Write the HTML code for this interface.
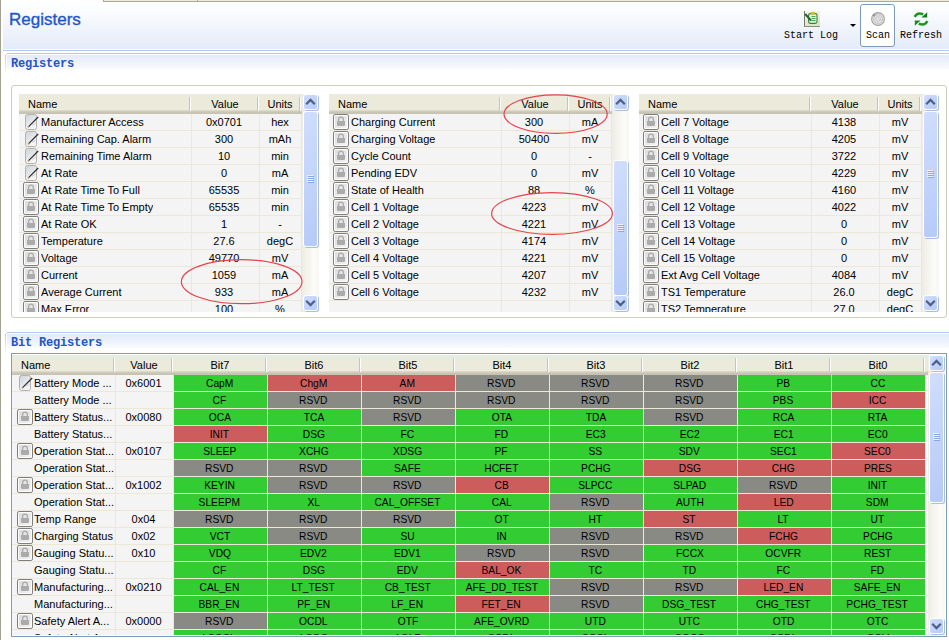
<!DOCTYPE html>
<html><head><meta charset="utf-8"><title>Registers</title>
<style>
html,body{margin:0;padding:0}
body{width:949px;height:640px;position:relative;overflow:hidden;background:#fff;font-family:"Liberation Sans",sans-serif;font-size:11px;color:#000}
.a{position:absolute;box-sizing:content-box}
.t{white-space:nowrap;overflow:hidden}
</style></head><body>
<svg width="0" height="0" style="position:absolute"><defs><linearGradient id="eg" x1="0" y1="0" x2="0.6" y2="1"><stop offset="0" stop-color="#cfd3d8"/><stop offset="1" stop-color="#f6f6f6"/></linearGradient><linearGradient id="lg" x1="0" y1="0" x2="1" y2="1"><stop offset="0" stop-color="#dcdcdc"/><stop offset="1" stop-color="#f2f2f2"/></linearGradient></defs></svg><div class="a" style="left:0;top:0;width:1px;height:640px;background:#a3a192"></div>
<div class="a" style="left:103px;top:0;width:846px;height:1px;background:#efebdb"></div>
<div class="a" style="left:103px;top:1px;width:846px;height:1px;background:#aba897"></div>
<div class="a" style="left:103px;top:0;width:1px;height:2px;background:#aba897"></div>
<div class="a" style="left:197px;top:0;width:1px;height:1px;background:#aba897"></div>
<div class="a" style="left:3px;top:2px;width:946px;height:47px;background:linear-gradient(to bottom,#ffffff 0%,#fafcfe 20%,#e4ebf9 100%)"></div>
<div class="a" style="left:3px;top:50px;width:946px;height:1px;background:#b3c8f1"></div>
<div class="a" style="left:9px;top:8px;font-size:17px;line-height:24px;color:#1f56c6;-webkit-text-stroke:0.35px #1f56c6;white-space:nowrap">Registers</div>
<div class="a" style="left:860px;top:4px;width:33px;height:41px;border:1px solid #7d9ab8;border-radius:3px;background:#fff"></div>
<div class="a" style="left:784px;top:30px;font-family:'Liberation Mono',monospace;font-size:10px;line-height:12px;white-space:nowrap;color:#000">Start Log</div>
<div class="a" style="left:866px;top:30px;font-family:'Liberation Mono',monospace;font-size:10px;line-height:12px;white-space:nowrap;color:#000">Scan</div>
<div class="a" style="left:900px;top:30px;font-family:'Liberation Mono',monospace;font-size:10px;line-height:12px;white-space:nowrap;color:#000">Refresh</div>
<div class="a" style="left:850px;top:24px;width:0;height:0;border-left:3px solid transparent;border-right:3px solid transparent;border-top:3px solid #000"></div>
<div class="a" style="left:804px;top:11px;width:16px;height:16px"><svg width="16" height="16" viewBox="0 0 16 16"><defs><linearGradient id="slbg" x1="0" y1="0" x2="0.3" y2="1"><stop offset="0" stop-color="#fbf4ec"/><stop offset="1" stop-color="#d9e6c4"/></linearGradient></defs><rect x="0" y="0" width="16" height="16" fill="url(#slbg)"/><rect x="0" y="0" width="1" height="16" fill="#77776c"/><rect x="0" y="15" width="16" height="1" fill="#8c8c82"/><rect x="4.6" y="2.6" width="8.4" height="9.8" rx="1.6" fill="#e4f2d2" stroke="#3d7d45" stroke-width="1.1"/><path d="M7.5 5.5h4M7.5 7.5h4M7.5 9.5h4" stroke="#49a553" stroke-width="1.1"/><rect x="6.8" y="1" width="4.2" height="2.6" fill="#c9bd2a"/><path d="M1.2 3 L7 9.6" stroke="#1e6a34" stroke-width="2.1"/></svg></div>
<div class="a" style="left:870px;top:11px;width:16px;height:16px"><svg width="16" height="16" viewBox="0 0 16 16"><defs><radialGradient id="scg" cx="0.3" cy="0.3" r="0.6"><stop offset="0" stop-color="#444"/><stop offset="0.5" stop-color="#bbb" stop-opacity="0.4"/><stop offset="1" stop-color="#ddd" stop-opacity="0"/></radialGradient></defs><circle cx="8" cy="8" r="6.4" fill="#e2e2e2" stroke="#a2a2a2" stroke-width="1.1"/><circle cx="8" cy="8" r="4.4" fill="none" stroke="#b4b4b4" stroke-width="1" stroke-dasharray="2 1"/><circle cx="8" cy="8" r="2.3" fill="none" stroke="#bdbdbd" stroke-width="1" stroke-dasharray="2 1"/><path d="M8 8 L2.2 6 A6.2 6.2 0 0 1 5.6 2.2 Z" fill="url(#scg)"/></svg></div>
<div class="a" style="left:913px;top:11px;width:16px;height:16px"><svg width="16" height="16" viewBox="0 0 16 16"><path d="M1.6 5.8 Q4.5 0.6 10.2 3.4" stroke="#1d961d" stroke-width="2.4" fill="none"/><path d="M14.2 1.3 L14.2 6.6 L8.4 6.4 Z" fill="#137f13"/><path d="M14.4 10.2 Q11.5 15.4 5.8 12.6" stroke="#1d961d" stroke-width="2.4" fill="none"/><path d="M1.8 14.7 L1.8 9.4 L7.6 9.6 Z" fill="#1a8c1a"/></svg></div>
<div class="a" style="left:7px;top:53px;width:942px;height:1px;background:#b3c8f1"></div>
<div class="a" style="left:6px;top:54px;width:1px;height:1px;background:#c8d7f5"></div>
<div class="a" style="left:5px;top:55px;width:1px;height:20px;background:linear-gradient(to bottom,#b3c8f1,rgba(179,200,241,0))"></div>
<div class="a" style="left:7px;top:55px;width:942px;height:14px;background:linear-gradient(to bottom,#e3eafa,#f8fafe)"></div>
<div class="a" style="left:11px;top:57px;font-family:'Liberation Mono',monospace;font-weight:bold;font-size:12px;line-height:14px;letter-spacing:-0.2px;color:#2356c1;white-space:nowrap">Registers</div>
<div class="a" style="left:11px;top:85px;width:934px;height:231px;border:1px solid #d0cebc;border-radius:3px;background:#fff"></div>
<div class="a" style="left:19px;top:94px;width:283px;height:20px;background:linear-gradient(to bottom,#ebeadb 0,#ebeadb 16px,#e2dfcf 16px,#d6d2c2 17px,#cbc7b8 18px,#c7c3b3 19px)"></div>
<div class="a t" style="left:28px;top:94px;width:163px;height:20px;line-height:20px">Name</div>
<div class="a" style="left:189px;top:97px;width:1px;height:14px;background:#c7c5b2"></div>
<div class="a" style="left:190px;top:97px;width:1px;height:14px;background:#fff"></div>
<div class="a t" style="left:191px;top:94px;width:68px;height:20px;line-height:20px;text-align:center">Value</div>
<div class="a" style="left:257px;top:97px;width:1px;height:14px;background:#c7c5b2"></div>
<div class="a" style="left:258px;top:97px;width:1px;height:14px;background:#fff"></div>
<div class="a t" style="left:259px;top:94px;width:42px;height:20px;line-height:20px;text-align:center">Units</div>
<div class="a" style="left:299px;top:97px;width:1px;height:14px;background:#c7c5b2"></div>
<div class="a" style="left:300px;top:97px;width:1px;height:14px;background:#fff"></div>
<div class="a" style="left:19px;top:114px;width:283px;height:198px;background:#f4f4f4;overflow:hidden"><div class="a" style="left:0;top:16px;width:283px;height:1px;background:#ebe8d6"></div><div class="a" style="left:0;top:33px;width:283px;height:1px;background:#ebe8d6"></div><div class="a" style="left:0;top:50px;width:283px;height:1px;background:#ebe8d6"></div><div class="a" style="left:0;top:67px;width:283px;height:1px;background:#ebe8d6"></div><div class="a" style="left:0;top:84px;width:283px;height:1px;background:#ebe8d6"></div><div class="a" style="left:0;top:101px;width:283px;height:1px;background:#ebe8d6"></div><div class="a" style="left:0;top:118px;width:283px;height:1px;background:#ebe8d6"></div><div class="a" style="left:0;top:135px;width:283px;height:1px;background:#ebe8d6"></div><div class="a" style="left:0;top:152px;width:283px;height:1px;background:#ebe8d6"></div><div class="a" style="left:0;top:169px;width:283px;height:1px;background:#ebe8d6"></div><div class="a" style="left:0;top:186px;width:283px;height:1px;background:#ebe8d6"></div><div class="a" style="left:0;top:203px;width:283px;height:1px;background:#ebe8d6"></div><div class="a" style="left:0;top:220px;width:283px;height:1px;background:#ebe8d6"></div><div class="a" style="left:0;top:237px;width:283px;height:1px;background:#ebe8d6"></div><div class="a" style="left:172px;top:0;width:1px;height:198px;background:#ebe8d6"></div><div class="a" style="left:240px;top:0;width:1px;height:198px;background:#ebe8d6"></div><div class="a" style="left:282px;top:0;width:1px;height:198px;background:#ebe8d6"></div><div class="a" style="left:6px;top:0px;width:16px;height:16px"><svg width="15" height="16" viewBox="0 0 15 16"><rect x="0.5" y="0.5" width="11" height="15" rx="2" fill="url(#eg)" stroke="#b2b2b2"/><path d="M13.2 3 L3.6 12.6" stroke="#2a2a2a" stroke-width="1.15"/><path d="M3.6 12.6 L3 13.4" stroke="#b08a50" stroke-width="1.4"/><path d="M7 11 L10.5 9.5" stroke="#c8c8c8" stroke-width="0.8"/></svg></div><div class="a t" style="left:22px;top:0px;height:16px;line-height:16px;white-space:nowrap">Manufacturer Access</div><div class="a t" style="left:171px;top:0px;width:68px;height:16px;line-height:16px;text-align:center">0x0701</div><div class="a t" style="left:240px;top:0px;width:42px;height:16px;line-height:16px;text-align:center">hex</div><div class="a" style="left:6px;top:17px;width:16px;height:16px"><svg width="15" height="16" viewBox="0 0 15 16"><rect x="0.5" y="0.5" width="11" height="15" rx="2" fill="url(#eg)" stroke="#b2b2b2"/><path d="M13.2 3 L3.6 12.6" stroke="#2a2a2a" stroke-width="1.15"/><path d="M3.6 12.6 L3 13.4" stroke="#b08a50" stroke-width="1.4"/><path d="M7 11 L10.5 9.5" stroke="#c8c8c8" stroke-width="0.8"/></svg></div><div class="a t" style="left:22px;top:17px;height:16px;line-height:16px;white-space:nowrap">Remaining Cap. Alarm</div><div class="a t" style="left:171px;top:17px;width:68px;height:16px;line-height:16px;text-align:center">300</div><div class="a t" style="left:240px;top:17px;width:42px;height:16px;line-height:16px;text-align:center">mAh</div><div class="a" style="left:6px;top:34px;width:16px;height:16px"><svg width="15" height="16" viewBox="0 0 15 16"><rect x="0.5" y="0.5" width="11" height="15" rx="2" fill="url(#eg)" stroke="#b2b2b2"/><path d="M13.2 3 L3.6 12.6" stroke="#2a2a2a" stroke-width="1.15"/><path d="M3.6 12.6 L3 13.4" stroke="#b08a50" stroke-width="1.4"/><path d="M7 11 L10.5 9.5" stroke="#c8c8c8" stroke-width="0.8"/></svg></div><div class="a t" style="left:22px;top:34px;height:16px;line-height:16px;white-space:nowrap">Remaining Time Alarm</div><div class="a t" style="left:171px;top:34px;width:68px;height:16px;line-height:16px;text-align:center">10</div><div class="a t" style="left:240px;top:34px;width:42px;height:16px;line-height:16px;text-align:center">min</div><div class="a" style="left:6px;top:51px;width:16px;height:16px"><svg width="15" height="16" viewBox="0 0 15 16"><rect x="0.5" y="0.5" width="11" height="15" rx="2" fill="url(#eg)" stroke="#b2b2b2"/><path d="M13.2 3 L3.6 12.6" stroke="#2a2a2a" stroke-width="1.15"/><path d="M3.6 12.6 L3 13.4" stroke="#b08a50" stroke-width="1.4"/><path d="M7 11 L10.5 9.5" stroke="#c8c8c8" stroke-width="0.8"/></svg></div><div class="a t" style="left:22px;top:51px;height:16px;line-height:16px;white-space:nowrap">At Rate</div><div class="a t" style="left:171px;top:51px;width:68px;height:16px;line-height:16px;text-align:center">0</div><div class="a t" style="left:240px;top:51px;width:42px;height:16px;line-height:16px;text-align:center">mA</div><div class="a" style="left:4px;top:68px;width:16px;height:16px"><svg width="16" height="16" viewBox="0 0 16 16"><rect x="0.5" y="0.5" width="15" height="15" rx="1.6" fill="#fff" stroke="#7e7e7e"/><rect x="2" y="2" width="12" height="12" fill="url(#lg)"/><path d="M5.6 7.5 V5.6 a2.4 2.4 0 0 1 4.8 0 V7.5" stroke="#ababab" stroke-width="1.3" fill="none"/><path d="M4 7 H12 V10.8 a1.2 1.2 0 0 1 -1.2 1.2 H5.2 a1.2 1.2 0 0 1 -1.2 -1.2 Z" fill="#ababab"/></svg></div><div class="a t" style="left:22px;top:68px;height:16px;line-height:16px;white-space:nowrap">At Rate Time To Full</div><div class="a t" style="left:171px;top:68px;width:68px;height:16px;line-height:16px;text-align:center">65535</div><div class="a t" style="left:240px;top:68px;width:42px;height:16px;line-height:16px;text-align:center">min</div><div class="a" style="left:4px;top:85px;width:16px;height:16px"><svg width="16" height="16" viewBox="0 0 16 16"><rect x="0.5" y="0.5" width="15" height="15" rx="1.6" fill="#fff" stroke="#7e7e7e"/><rect x="2" y="2" width="12" height="12" fill="url(#lg)"/><path d="M5.6 7.5 V5.6 a2.4 2.4 0 0 1 4.8 0 V7.5" stroke="#ababab" stroke-width="1.3" fill="none"/><path d="M4 7 H12 V10.8 a1.2 1.2 0 0 1 -1.2 1.2 H5.2 a1.2 1.2 0 0 1 -1.2 -1.2 Z" fill="#ababab"/></svg></div><div class="a t" style="left:22px;top:85px;height:16px;line-height:16px;white-space:nowrap">At Rate Time To Empty</div><div class="a t" style="left:171px;top:85px;width:68px;height:16px;line-height:16px;text-align:center">65535</div><div class="a t" style="left:240px;top:85px;width:42px;height:16px;line-height:16px;text-align:center">min</div><div class="a" style="left:4px;top:102px;width:16px;height:16px"><svg width="16" height="16" viewBox="0 0 16 16"><rect x="0.5" y="0.5" width="15" height="15" rx="1.6" fill="#fff" stroke="#7e7e7e"/><rect x="2" y="2" width="12" height="12" fill="url(#lg)"/><path d="M5.6 7.5 V5.6 a2.4 2.4 0 0 1 4.8 0 V7.5" stroke="#ababab" stroke-width="1.3" fill="none"/><path d="M4 7 H12 V10.8 a1.2 1.2 0 0 1 -1.2 1.2 H5.2 a1.2 1.2 0 0 1 -1.2 -1.2 Z" fill="#ababab"/></svg></div><div class="a t" style="left:22px;top:102px;height:16px;line-height:16px;white-space:nowrap">At Rate OK</div><div class="a t" style="left:171px;top:102px;width:68px;height:16px;line-height:16px;text-align:center">1</div><div class="a t" style="left:240px;top:102px;width:42px;height:16px;line-height:16px;text-align:center">-</div><div class="a" style="left:4px;top:119px;width:16px;height:16px"><svg width="16" height="16" viewBox="0 0 16 16"><rect x="0.5" y="0.5" width="15" height="15" rx="1.6" fill="#fff" stroke="#7e7e7e"/><rect x="2" y="2" width="12" height="12" fill="url(#lg)"/><path d="M5.6 7.5 V5.6 a2.4 2.4 0 0 1 4.8 0 V7.5" stroke="#ababab" stroke-width="1.3" fill="none"/><path d="M4 7 H12 V10.8 a1.2 1.2 0 0 1 -1.2 1.2 H5.2 a1.2 1.2 0 0 1 -1.2 -1.2 Z" fill="#ababab"/></svg></div><div class="a t" style="left:22px;top:119px;height:16px;line-height:16px;white-space:nowrap">Temperature</div><div class="a t" style="left:171px;top:119px;width:68px;height:16px;line-height:16px;text-align:center">27.6</div><div class="a t" style="left:240px;top:119px;width:42px;height:16px;line-height:16px;text-align:center">degC</div><div class="a" style="left:4px;top:136px;width:16px;height:16px"><svg width="16" height="16" viewBox="0 0 16 16"><rect x="0.5" y="0.5" width="15" height="15" rx="1.6" fill="#fff" stroke="#7e7e7e"/><rect x="2" y="2" width="12" height="12" fill="url(#lg)"/><path d="M5.6 7.5 V5.6 a2.4 2.4 0 0 1 4.8 0 V7.5" stroke="#ababab" stroke-width="1.3" fill="none"/><path d="M4 7 H12 V10.8 a1.2 1.2 0 0 1 -1.2 1.2 H5.2 a1.2 1.2 0 0 1 -1.2 -1.2 Z" fill="#ababab"/></svg></div><div class="a t" style="left:22px;top:136px;height:16px;line-height:16px;white-space:nowrap">Voltage</div><div class="a t" style="left:171px;top:136px;width:68px;height:16px;line-height:16px;text-align:center">49770</div><div class="a t" style="left:240px;top:136px;width:42px;height:16px;line-height:16px;text-align:center">mV</div><div class="a" style="left:4px;top:153px;width:16px;height:16px"><svg width="16" height="16" viewBox="0 0 16 16"><rect x="0.5" y="0.5" width="15" height="15" rx="1.6" fill="#fff" stroke="#7e7e7e"/><rect x="2" y="2" width="12" height="12" fill="url(#lg)"/><path d="M5.6 7.5 V5.6 a2.4 2.4 0 0 1 4.8 0 V7.5" stroke="#ababab" stroke-width="1.3" fill="none"/><path d="M4 7 H12 V10.8 a1.2 1.2 0 0 1 -1.2 1.2 H5.2 a1.2 1.2 0 0 1 -1.2 -1.2 Z" fill="#ababab"/></svg></div><div class="a t" style="left:22px;top:153px;height:16px;line-height:16px;white-space:nowrap">Current</div><div class="a t" style="left:171px;top:153px;width:68px;height:16px;line-height:16px;text-align:center">1059</div><div class="a t" style="left:240px;top:153px;width:42px;height:16px;line-height:16px;text-align:center">mA</div><div class="a" style="left:4px;top:170px;width:16px;height:16px"><svg width="16" height="16" viewBox="0 0 16 16"><rect x="0.5" y="0.5" width="15" height="15" rx="1.6" fill="#fff" stroke="#7e7e7e"/><rect x="2" y="2" width="12" height="12" fill="url(#lg)"/><path d="M5.6 7.5 V5.6 a2.4 2.4 0 0 1 4.8 0 V7.5" stroke="#ababab" stroke-width="1.3" fill="none"/><path d="M4 7 H12 V10.8 a1.2 1.2 0 0 1 -1.2 1.2 H5.2 a1.2 1.2 0 0 1 -1.2 -1.2 Z" fill="#ababab"/></svg></div><div class="a t" style="left:22px;top:170px;height:16px;line-height:16px;white-space:nowrap">Average Current</div><div class="a t" style="left:171px;top:170px;width:68px;height:16px;line-height:16px;text-align:center">933</div><div class="a t" style="left:240px;top:170px;width:42px;height:16px;line-height:16px;text-align:center">mA</div><div class="a" style="left:4px;top:187px;width:16px;height:16px"><svg width="16" height="16" viewBox="0 0 16 16"><rect x="0.5" y="0.5" width="15" height="15" rx="1.6" fill="#fff" stroke="#7e7e7e"/><rect x="2" y="2" width="12" height="12" fill="url(#lg)"/><path d="M5.6 7.5 V5.6 a2.4 2.4 0 0 1 4.8 0 V7.5" stroke="#ababab" stroke-width="1.3" fill="none"/><path d="M4 7 H12 V10.8 a1.2 1.2 0 0 1 -1.2 1.2 H5.2 a1.2 1.2 0 0 1 -1.2 -1.2 Z" fill="#ababab"/></svg></div><div class="a t" style="left:22px;top:187px;height:16px;line-height:16px;white-space:nowrap">Max Error</div><div class="a t" style="left:171px;top:187px;width:68px;height:16px;line-height:16px;text-align:center">100</div><div class="a t" style="left:240px;top:187px;width:42px;height:16px;line-height:16px;text-align:center">%</div></div>
<div class="a" style="left:302px;top:94px;width:17px;height:218px;background:linear-gradient(to right,#eeede4,#fbfbf8 70%,#f8f7f2)"></div>
<div class="a" style="left:303px;top:94px;width:13px;height:14px;background:linear-gradient(135deg,#d0ddfd,#b6caf8);border:1px solid #fdfeff;border-radius:3px;box-shadow:1px 1px 0 #a9bde3"><svg width="13" height="14" viewBox="0 0 13 14" style="position:absolute;left:0;top:0"><path d="M2.2 9.2 L6.5 4.9 L10.8 9.2" stroke="#4d6185" stroke-width="2.2" fill="none"/></svg></div>
<div class="a" style="left:303px;top:111px;width:13px;height:134px;background:linear-gradient(135deg,#d0ddfd,#b6caf8);border:1px solid #fdfeff;border-radius:3px;box-shadow:1px 1px 0 #a9bde3"><svg width="13" height="134" style="position:absolute;left:0;top:0"><rect x="3" y="63" width="6" height="1" fill="#eef3ff"/><rect x="4" y="64" width="6" height="1" fill="#8aa6e8"/><rect x="3" y="65" width="6" height="1" fill="#eef3ff"/><rect x="4" y="66" width="6" height="1" fill="#8aa6e8"/><rect x="3" y="67" width="6" height="1" fill="#eef3ff"/><rect x="4" y="68" width="6" height="1" fill="#8aa6e8"/><rect x="3" y="69" width="6" height="1" fill="#eef3ff"/><rect x="4" y="70" width="6" height="1" fill="#8aa6e8"/></svg></div>
<div class="a" style="left:303px;top:295px;width:13px;height:14px;background:linear-gradient(135deg,#d0ddfd,#b6caf8);border:1px solid #fdfeff;border-radius:3px;box-shadow:1px 1px 0 #a9bde3"><svg width="13" height="14" viewBox="0 0 13 14" style="position:absolute;left:0;top:0"><path d="M2.2 4.8 L6.5 9.1 L10.8 4.8" stroke="#4d6185" stroke-width="2.2" fill="none"/></svg></div>
<div class="a" style="left:329px;top:94px;width:283px;height:20px;background:linear-gradient(to bottom,#ebeadb 0,#ebeadb 16px,#e2dfcf 16px,#d6d2c2 17px,#cbc7b8 18px,#c7c3b3 19px)"></div>
<div class="a t" style="left:338px;top:94px;width:163px;height:20px;line-height:20px">Name</div>
<div class="a" style="left:499px;top:97px;width:1px;height:14px;background:#c7c5b2"></div>
<div class="a" style="left:500px;top:97px;width:1px;height:14px;background:#fff"></div>
<div class="a t" style="left:501px;top:94px;width:68px;height:20px;line-height:20px;text-align:center">Value</div>
<div class="a" style="left:567px;top:97px;width:1px;height:14px;background:#c7c5b2"></div>
<div class="a" style="left:568px;top:97px;width:1px;height:14px;background:#fff"></div>
<div class="a t" style="left:569px;top:94px;width:42px;height:20px;line-height:20px;text-align:center">Units</div>
<div class="a" style="left:609px;top:97px;width:1px;height:14px;background:#c7c5b2"></div>
<div class="a" style="left:610px;top:97px;width:1px;height:14px;background:#fff"></div>
<div class="a" style="left:329px;top:114px;width:283px;height:198px;background:#f4f4f4;overflow:hidden"><div class="a" style="left:0;top:16px;width:283px;height:1px;background:#ebe8d6"></div><div class="a" style="left:0;top:33px;width:283px;height:1px;background:#ebe8d6"></div><div class="a" style="left:0;top:50px;width:283px;height:1px;background:#ebe8d6"></div><div class="a" style="left:0;top:67px;width:283px;height:1px;background:#ebe8d6"></div><div class="a" style="left:0;top:84px;width:283px;height:1px;background:#ebe8d6"></div><div class="a" style="left:0;top:101px;width:283px;height:1px;background:#ebe8d6"></div><div class="a" style="left:0;top:118px;width:283px;height:1px;background:#ebe8d6"></div><div class="a" style="left:0;top:135px;width:283px;height:1px;background:#ebe8d6"></div><div class="a" style="left:0;top:152px;width:283px;height:1px;background:#ebe8d6"></div><div class="a" style="left:0;top:169px;width:283px;height:1px;background:#ebe8d6"></div><div class="a" style="left:0;top:186px;width:283px;height:1px;background:#ebe8d6"></div><div class="a" style="left:0;top:203px;width:283px;height:1px;background:#ebe8d6"></div><div class="a" style="left:0;top:220px;width:283px;height:1px;background:#ebe8d6"></div><div class="a" style="left:0;top:237px;width:283px;height:1px;background:#ebe8d6"></div><div class="a" style="left:172px;top:0;width:1px;height:198px;background:#ebe8d6"></div><div class="a" style="left:240px;top:0;width:1px;height:198px;background:#ebe8d6"></div><div class="a" style="left:282px;top:0;width:1px;height:198px;background:#ebe8d6"></div><div class="a" style="left:4px;top:0px;width:16px;height:16px"><svg width="16" height="16" viewBox="0 0 16 16"><rect x="0.5" y="0.5" width="15" height="15" rx="1.6" fill="#fff" stroke="#7e7e7e"/><rect x="2" y="2" width="12" height="12" fill="url(#lg)"/><path d="M5.6 7.5 V5.6 a2.4 2.4 0 0 1 4.8 0 V7.5" stroke="#ababab" stroke-width="1.3" fill="none"/><path d="M4 7 H12 V10.8 a1.2 1.2 0 0 1 -1.2 1.2 H5.2 a1.2 1.2 0 0 1 -1.2 -1.2 Z" fill="#ababab"/></svg></div><div class="a t" style="left:22px;top:0px;height:16px;line-height:16px;white-space:nowrap">Charging Current</div><div class="a t" style="left:171px;top:0px;width:68px;height:16px;line-height:16px;text-align:center">300</div><div class="a t" style="left:240px;top:0px;width:42px;height:16px;line-height:16px;text-align:center">mA</div><div class="a" style="left:4px;top:17px;width:16px;height:16px"><svg width="16" height="16" viewBox="0 0 16 16"><rect x="0.5" y="0.5" width="15" height="15" rx="1.6" fill="#fff" stroke="#7e7e7e"/><rect x="2" y="2" width="12" height="12" fill="url(#lg)"/><path d="M5.6 7.5 V5.6 a2.4 2.4 0 0 1 4.8 0 V7.5" stroke="#ababab" stroke-width="1.3" fill="none"/><path d="M4 7 H12 V10.8 a1.2 1.2 0 0 1 -1.2 1.2 H5.2 a1.2 1.2 0 0 1 -1.2 -1.2 Z" fill="#ababab"/></svg></div><div class="a t" style="left:22px;top:17px;height:16px;line-height:16px;white-space:nowrap">Charging Voltage</div><div class="a t" style="left:171px;top:17px;width:68px;height:16px;line-height:16px;text-align:center">50400</div><div class="a t" style="left:240px;top:17px;width:42px;height:16px;line-height:16px;text-align:center">mV</div><div class="a" style="left:4px;top:34px;width:16px;height:16px"><svg width="16" height="16" viewBox="0 0 16 16"><rect x="0.5" y="0.5" width="15" height="15" rx="1.6" fill="#fff" stroke="#7e7e7e"/><rect x="2" y="2" width="12" height="12" fill="url(#lg)"/><path d="M5.6 7.5 V5.6 a2.4 2.4 0 0 1 4.8 0 V7.5" stroke="#ababab" stroke-width="1.3" fill="none"/><path d="M4 7 H12 V10.8 a1.2 1.2 0 0 1 -1.2 1.2 H5.2 a1.2 1.2 0 0 1 -1.2 -1.2 Z" fill="#ababab"/></svg></div><div class="a t" style="left:22px;top:34px;height:16px;line-height:16px;white-space:nowrap">Cycle Count</div><div class="a t" style="left:171px;top:34px;width:68px;height:16px;line-height:16px;text-align:center">0</div><div class="a t" style="left:240px;top:34px;width:42px;height:16px;line-height:16px;text-align:center">-</div><div class="a" style="left:4px;top:51px;width:16px;height:16px"><svg width="16" height="16" viewBox="0 0 16 16"><rect x="0.5" y="0.5" width="15" height="15" rx="1.6" fill="#fff" stroke="#7e7e7e"/><rect x="2" y="2" width="12" height="12" fill="url(#lg)"/><path d="M5.6 7.5 V5.6 a2.4 2.4 0 0 1 4.8 0 V7.5" stroke="#ababab" stroke-width="1.3" fill="none"/><path d="M4 7 H12 V10.8 a1.2 1.2 0 0 1 -1.2 1.2 H5.2 a1.2 1.2 0 0 1 -1.2 -1.2 Z" fill="#ababab"/></svg></div><div class="a t" style="left:22px;top:51px;height:16px;line-height:16px;white-space:nowrap">Pending EDV</div><div class="a t" style="left:171px;top:51px;width:68px;height:16px;line-height:16px;text-align:center">0</div><div class="a t" style="left:240px;top:51px;width:42px;height:16px;line-height:16px;text-align:center">mV</div><div class="a" style="left:4px;top:68px;width:16px;height:16px"><svg width="16" height="16" viewBox="0 0 16 16"><rect x="0.5" y="0.5" width="15" height="15" rx="1.6" fill="#fff" stroke="#7e7e7e"/><rect x="2" y="2" width="12" height="12" fill="url(#lg)"/><path d="M5.6 7.5 V5.6 a2.4 2.4 0 0 1 4.8 0 V7.5" stroke="#ababab" stroke-width="1.3" fill="none"/><path d="M4 7 H12 V10.8 a1.2 1.2 0 0 1 -1.2 1.2 H5.2 a1.2 1.2 0 0 1 -1.2 -1.2 Z" fill="#ababab"/></svg></div><div class="a t" style="left:22px;top:68px;height:16px;line-height:16px;white-space:nowrap">State of Health</div><div class="a t" style="left:171px;top:68px;width:68px;height:16px;line-height:16px;text-align:center">88</div><div class="a t" style="left:240px;top:68px;width:42px;height:16px;line-height:16px;text-align:center">%</div><div class="a" style="left:4px;top:85px;width:16px;height:16px"><svg width="16" height="16" viewBox="0 0 16 16"><rect x="0.5" y="0.5" width="15" height="15" rx="1.6" fill="#fff" stroke="#7e7e7e"/><rect x="2" y="2" width="12" height="12" fill="url(#lg)"/><path d="M5.6 7.5 V5.6 a2.4 2.4 0 0 1 4.8 0 V7.5" stroke="#ababab" stroke-width="1.3" fill="none"/><path d="M4 7 H12 V10.8 a1.2 1.2 0 0 1 -1.2 1.2 H5.2 a1.2 1.2 0 0 1 -1.2 -1.2 Z" fill="#ababab"/></svg></div><div class="a t" style="left:22px;top:85px;height:16px;line-height:16px;white-space:nowrap">Cell 1 Voltage</div><div class="a t" style="left:171px;top:85px;width:68px;height:16px;line-height:16px;text-align:center">4223</div><div class="a t" style="left:240px;top:85px;width:42px;height:16px;line-height:16px;text-align:center">mV</div><div class="a" style="left:4px;top:102px;width:16px;height:16px"><svg width="16" height="16" viewBox="0 0 16 16"><rect x="0.5" y="0.5" width="15" height="15" rx="1.6" fill="#fff" stroke="#7e7e7e"/><rect x="2" y="2" width="12" height="12" fill="url(#lg)"/><path d="M5.6 7.5 V5.6 a2.4 2.4 0 0 1 4.8 0 V7.5" stroke="#ababab" stroke-width="1.3" fill="none"/><path d="M4 7 H12 V10.8 a1.2 1.2 0 0 1 -1.2 1.2 H5.2 a1.2 1.2 0 0 1 -1.2 -1.2 Z" fill="#ababab"/></svg></div><div class="a t" style="left:22px;top:102px;height:16px;line-height:16px;white-space:nowrap">Cell 2 Voltage</div><div class="a t" style="left:171px;top:102px;width:68px;height:16px;line-height:16px;text-align:center">4221</div><div class="a t" style="left:240px;top:102px;width:42px;height:16px;line-height:16px;text-align:center">mV</div><div class="a" style="left:4px;top:119px;width:16px;height:16px"><svg width="16" height="16" viewBox="0 0 16 16"><rect x="0.5" y="0.5" width="15" height="15" rx="1.6" fill="#fff" stroke="#7e7e7e"/><rect x="2" y="2" width="12" height="12" fill="url(#lg)"/><path d="M5.6 7.5 V5.6 a2.4 2.4 0 0 1 4.8 0 V7.5" stroke="#ababab" stroke-width="1.3" fill="none"/><path d="M4 7 H12 V10.8 a1.2 1.2 0 0 1 -1.2 1.2 H5.2 a1.2 1.2 0 0 1 -1.2 -1.2 Z" fill="#ababab"/></svg></div><div class="a t" style="left:22px;top:119px;height:16px;line-height:16px;white-space:nowrap">Cell 3 Voltage</div><div class="a t" style="left:171px;top:119px;width:68px;height:16px;line-height:16px;text-align:center">4174</div><div class="a t" style="left:240px;top:119px;width:42px;height:16px;line-height:16px;text-align:center">mV</div><div class="a" style="left:4px;top:136px;width:16px;height:16px"><svg width="16" height="16" viewBox="0 0 16 16"><rect x="0.5" y="0.5" width="15" height="15" rx="1.6" fill="#fff" stroke="#7e7e7e"/><rect x="2" y="2" width="12" height="12" fill="url(#lg)"/><path d="M5.6 7.5 V5.6 a2.4 2.4 0 0 1 4.8 0 V7.5" stroke="#ababab" stroke-width="1.3" fill="none"/><path d="M4 7 H12 V10.8 a1.2 1.2 0 0 1 -1.2 1.2 H5.2 a1.2 1.2 0 0 1 -1.2 -1.2 Z" fill="#ababab"/></svg></div><div class="a t" style="left:22px;top:136px;height:16px;line-height:16px;white-space:nowrap">Cell 4 Voltage</div><div class="a t" style="left:171px;top:136px;width:68px;height:16px;line-height:16px;text-align:center">4221</div><div class="a t" style="left:240px;top:136px;width:42px;height:16px;line-height:16px;text-align:center">mV</div><div class="a" style="left:4px;top:153px;width:16px;height:16px"><svg width="16" height="16" viewBox="0 0 16 16"><rect x="0.5" y="0.5" width="15" height="15" rx="1.6" fill="#fff" stroke="#7e7e7e"/><rect x="2" y="2" width="12" height="12" fill="url(#lg)"/><path d="M5.6 7.5 V5.6 a2.4 2.4 0 0 1 4.8 0 V7.5" stroke="#ababab" stroke-width="1.3" fill="none"/><path d="M4 7 H12 V10.8 a1.2 1.2 0 0 1 -1.2 1.2 H5.2 a1.2 1.2 0 0 1 -1.2 -1.2 Z" fill="#ababab"/></svg></div><div class="a t" style="left:22px;top:153px;height:16px;line-height:16px;white-space:nowrap">Cell 5 Voltage</div><div class="a t" style="left:171px;top:153px;width:68px;height:16px;line-height:16px;text-align:center">4207</div><div class="a t" style="left:240px;top:153px;width:42px;height:16px;line-height:16px;text-align:center">mV</div><div class="a" style="left:4px;top:170px;width:16px;height:16px"><svg width="16" height="16" viewBox="0 0 16 16"><rect x="0.5" y="0.5" width="15" height="15" rx="1.6" fill="#fff" stroke="#7e7e7e"/><rect x="2" y="2" width="12" height="12" fill="url(#lg)"/><path d="M5.6 7.5 V5.6 a2.4 2.4 0 0 1 4.8 0 V7.5" stroke="#ababab" stroke-width="1.3" fill="none"/><path d="M4 7 H12 V10.8 a1.2 1.2 0 0 1 -1.2 1.2 H5.2 a1.2 1.2 0 0 1 -1.2 -1.2 Z" fill="#ababab"/></svg></div><div class="a t" style="left:22px;top:170px;height:16px;line-height:16px;white-space:nowrap">Cell 6 Voltage</div><div class="a t" style="left:171px;top:170px;width:68px;height:16px;line-height:16px;text-align:center">4232</div><div class="a t" style="left:240px;top:170px;width:42px;height:16px;line-height:16px;text-align:center">mV</div><div class="a t" style="left:22px;top:187px;height:16px;line-height:16px;white-space:nowrap"></div><div class="a t" style="left:171px;top:187px;width:68px;height:16px;line-height:16px;text-align:center"></div><div class="a t" style="left:240px;top:187px;width:42px;height:16px;line-height:16px;text-align:center"></div></div>
<div class="a" style="left:612px;top:94px;width:17px;height:218px;background:linear-gradient(to right,#eeede4,#fbfbf8 70%,#f8f7f2)"></div>
<div class="a" style="left:613px;top:94px;width:13px;height:14px;background:linear-gradient(135deg,#d0ddfd,#b6caf8);border:1px solid #fdfeff;border-radius:3px;box-shadow:1px 1px 0 #a9bde3"><svg width="13" height="14" viewBox="0 0 13 14" style="position:absolute;left:0;top:0"><path d="M2.2 9.2 L6.5 4.9 L10.8 9.2" stroke="#4d6185" stroke-width="2.2" fill="none"/></svg></div>
<div class="a" style="left:613px;top:160px;width:13px;height:134px;background:linear-gradient(135deg,#d0ddfd,#b6caf8);border:1px solid #fdfeff;border-radius:3px;box-shadow:1px 1px 0 #a9bde3"><svg width="13" height="134" style="position:absolute;left:0;top:0"><rect x="3" y="63" width="6" height="1" fill="#eef3ff"/><rect x="4" y="64" width="6" height="1" fill="#8aa6e8"/><rect x="3" y="65" width="6" height="1" fill="#eef3ff"/><rect x="4" y="66" width="6" height="1" fill="#8aa6e8"/><rect x="3" y="67" width="6" height="1" fill="#eef3ff"/><rect x="4" y="68" width="6" height="1" fill="#8aa6e8"/><rect x="3" y="69" width="6" height="1" fill="#eef3ff"/><rect x="4" y="70" width="6" height="1" fill="#8aa6e8"/></svg></div>
<div class="a" style="left:613px;top:295px;width:13px;height:14px;background:linear-gradient(135deg,#d0ddfd,#b6caf8);border:1px solid #fdfeff;border-radius:3px;box-shadow:1px 1px 0 #a9bde3"><svg width="13" height="14" viewBox="0 0 13 14" style="position:absolute;left:0;top:0"><path d="M2.2 4.8 L6.5 9.1 L10.8 4.8" stroke="#4d6185" stroke-width="2.2" fill="none"/></svg></div>
<div class="a" style="left:639px;top:94px;width:283px;height:20px;background:linear-gradient(to bottom,#ebeadb 0,#ebeadb 16px,#e2dfcf 16px,#d6d2c2 17px,#cbc7b8 18px,#c7c3b3 19px)"></div>
<div class="a t" style="left:648px;top:94px;width:163px;height:20px;line-height:20px">Name</div>
<div class="a" style="left:809px;top:97px;width:1px;height:14px;background:#c7c5b2"></div>
<div class="a" style="left:810px;top:97px;width:1px;height:14px;background:#fff"></div>
<div class="a t" style="left:811px;top:94px;width:68px;height:20px;line-height:20px;text-align:center">Value</div>
<div class="a" style="left:877px;top:97px;width:1px;height:14px;background:#c7c5b2"></div>
<div class="a" style="left:878px;top:97px;width:1px;height:14px;background:#fff"></div>
<div class="a t" style="left:879px;top:94px;width:42px;height:20px;line-height:20px;text-align:center">Units</div>
<div class="a" style="left:919px;top:97px;width:1px;height:14px;background:#c7c5b2"></div>
<div class="a" style="left:920px;top:97px;width:1px;height:14px;background:#fff"></div>
<div class="a" style="left:639px;top:114px;width:283px;height:198px;background:#f4f4f4;overflow:hidden"><div class="a" style="left:0;top:16px;width:283px;height:1px;background:#ebe8d6"></div><div class="a" style="left:0;top:33px;width:283px;height:1px;background:#ebe8d6"></div><div class="a" style="left:0;top:50px;width:283px;height:1px;background:#ebe8d6"></div><div class="a" style="left:0;top:67px;width:283px;height:1px;background:#ebe8d6"></div><div class="a" style="left:0;top:84px;width:283px;height:1px;background:#ebe8d6"></div><div class="a" style="left:0;top:101px;width:283px;height:1px;background:#ebe8d6"></div><div class="a" style="left:0;top:118px;width:283px;height:1px;background:#ebe8d6"></div><div class="a" style="left:0;top:135px;width:283px;height:1px;background:#ebe8d6"></div><div class="a" style="left:0;top:152px;width:283px;height:1px;background:#ebe8d6"></div><div class="a" style="left:0;top:169px;width:283px;height:1px;background:#ebe8d6"></div><div class="a" style="left:0;top:186px;width:283px;height:1px;background:#ebe8d6"></div><div class="a" style="left:0;top:203px;width:283px;height:1px;background:#ebe8d6"></div><div class="a" style="left:0;top:220px;width:283px;height:1px;background:#ebe8d6"></div><div class="a" style="left:0;top:237px;width:283px;height:1px;background:#ebe8d6"></div><div class="a" style="left:172px;top:0;width:1px;height:198px;background:#ebe8d6"></div><div class="a" style="left:240px;top:0;width:1px;height:198px;background:#ebe8d6"></div><div class="a" style="left:282px;top:0;width:1px;height:198px;background:#ebe8d6"></div><div class="a" style="left:4px;top:0px;width:16px;height:16px"><svg width="16" height="16" viewBox="0 0 16 16"><rect x="0.5" y="0.5" width="15" height="15" rx="1.6" fill="#fff" stroke="#7e7e7e"/><rect x="2" y="2" width="12" height="12" fill="url(#lg)"/><path d="M5.6 7.5 V5.6 a2.4 2.4 0 0 1 4.8 0 V7.5" stroke="#ababab" stroke-width="1.3" fill="none"/><path d="M4 7 H12 V10.8 a1.2 1.2 0 0 1 -1.2 1.2 H5.2 a1.2 1.2 0 0 1 -1.2 -1.2 Z" fill="#ababab"/></svg></div><div class="a t" style="left:22px;top:0px;height:16px;line-height:16px;white-space:nowrap">Cell 7 Voltage</div><div class="a t" style="left:171px;top:0px;width:68px;height:16px;line-height:16px;text-align:center">4138</div><div class="a t" style="left:240px;top:0px;width:42px;height:16px;line-height:16px;text-align:center">mV</div><div class="a" style="left:4px;top:17px;width:16px;height:16px"><svg width="16" height="16" viewBox="0 0 16 16"><rect x="0.5" y="0.5" width="15" height="15" rx="1.6" fill="#fff" stroke="#7e7e7e"/><rect x="2" y="2" width="12" height="12" fill="url(#lg)"/><path d="M5.6 7.5 V5.6 a2.4 2.4 0 0 1 4.8 0 V7.5" stroke="#ababab" stroke-width="1.3" fill="none"/><path d="M4 7 H12 V10.8 a1.2 1.2 0 0 1 -1.2 1.2 H5.2 a1.2 1.2 0 0 1 -1.2 -1.2 Z" fill="#ababab"/></svg></div><div class="a t" style="left:22px;top:17px;height:16px;line-height:16px;white-space:nowrap">Cell 8 Voltage</div><div class="a t" style="left:171px;top:17px;width:68px;height:16px;line-height:16px;text-align:center">4205</div><div class="a t" style="left:240px;top:17px;width:42px;height:16px;line-height:16px;text-align:center">mV</div><div class="a" style="left:4px;top:34px;width:16px;height:16px"><svg width="16" height="16" viewBox="0 0 16 16"><rect x="0.5" y="0.5" width="15" height="15" rx="1.6" fill="#fff" stroke="#7e7e7e"/><rect x="2" y="2" width="12" height="12" fill="url(#lg)"/><path d="M5.6 7.5 V5.6 a2.4 2.4 0 0 1 4.8 0 V7.5" stroke="#ababab" stroke-width="1.3" fill="none"/><path d="M4 7 H12 V10.8 a1.2 1.2 0 0 1 -1.2 1.2 H5.2 a1.2 1.2 0 0 1 -1.2 -1.2 Z" fill="#ababab"/></svg></div><div class="a t" style="left:22px;top:34px;height:16px;line-height:16px;white-space:nowrap">Cell 9 Voltage</div><div class="a t" style="left:171px;top:34px;width:68px;height:16px;line-height:16px;text-align:center">3722</div><div class="a t" style="left:240px;top:34px;width:42px;height:16px;line-height:16px;text-align:center">mV</div><div class="a" style="left:4px;top:51px;width:16px;height:16px"><svg width="16" height="16" viewBox="0 0 16 16"><rect x="0.5" y="0.5" width="15" height="15" rx="1.6" fill="#fff" stroke="#7e7e7e"/><rect x="2" y="2" width="12" height="12" fill="url(#lg)"/><path d="M5.6 7.5 V5.6 a2.4 2.4 0 0 1 4.8 0 V7.5" stroke="#ababab" stroke-width="1.3" fill="none"/><path d="M4 7 H12 V10.8 a1.2 1.2 0 0 1 -1.2 1.2 H5.2 a1.2 1.2 0 0 1 -1.2 -1.2 Z" fill="#ababab"/></svg></div><div class="a t" style="left:22px;top:51px;height:16px;line-height:16px;white-space:nowrap">Cell 10 Voltage</div><div class="a t" style="left:171px;top:51px;width:68px;height:16px;line-height:16px;text-align:center">4229</div><div class="a t" style="left:240px;top:51px;width:42px;height:16px;line-height:16px;text-align:center">mV</div><div class="a" style="left:4px;top:68px;width:16px;height:16px"><svg width="16" height="16" viewBox="0 0 16 16"><rect x="0.5" y="0.5" width="15" height="15" rx="1.6" fill="#fff" stroke="#7e7e7e"/><rect x="2" y="2" width="12" height="12" fill="url(#lg)"/><path d="M5.6 7.5 V5.6 a2.4 2.4 0 0 1 4.8 0 V7.5" stroke="#ababab" stroke-width="1.3" fill="none"/><path d="M4 7 H12 V10.8 a1.2 1.2 0 0 1 -1.2 1.2 H5.2 a1.2 1.2 0 0 1 -1.2 -1.2 Z" fill="#ababab"/></svg></div><div class="a t" style="left:22px;top:68px;height:16px;line-height:16px;white-space:nowrap">Cell 11 Voltage</div><div class="a t" style="left:171px;top:68px;width:68px;height:16px;line-height:16px;text-align:center">4160</div><div class="a t" style="left:240px;top:68px;width:42px;height:16px;line-height:16px;text-align:center">mV</div><div class="a" style="left:4px;top:85px;width:16px;height:16px"><svg width="16" height="16" viewBox="0 0 16 16"><rect x="0.5" y="0.5" width="15" height="15" rx="1.6" fill="#fff" stroke="#7e7e7e"/><rect x="2" y="2" width="12" height="12" fill="url(#lg)"/><path d="M5.6 7.5 V5.6 a2.4 2.4 0 0 1 4.8 0 V7.5" stroke="#ababab" stroke-width="1.3" fill="none"/><path d="M4 7 H12 V10.8 a1.2 1.2 0 0 1 -1.2 1.2 H5.2 a1.2 1.2 0 0 1 -1.2 -1.2 Z" fill="#ababab"/></svg></div><div class="a t" style="left:22px;top:85px;height:16px;line-height:16px;white-space:nowrap">Cell 12 Voltage</div><div class="a t" style="left:171px;top:85px;width:68px;height:16px;line-height:16px;text-align:center">4022</div><div class="a t" style="left:240px;top:85px;width:42px;height:16px;line-height:16px;text-align:center">mV</div><div class="a" style="left:4px;top:102px;width:16px;height:16px"><svg width="16" height="16" viewBox="0 0 16 16"><rect x="0.5" y="0.5" width="15" height="15" rx="1.6" fill="#fff" stroke="#7e7e7e"/><rect x="2" y="2" width="12" height="12" fill="url(#lg)"/><path d="M5.6 7.5 V5.6 a2.4 2.4 0 0 1 4.8 0 V7.5" stroke="#ababab" stroke-width="1.3" fill="none"/><path d="M4 7 H12 V10.8 a1.2 1.2 0 0 1 -1.2 1.2 H5.2 a1.2 1.2 0 0 1 -1.2 -1.2 Z" fill="#ababab"/></svg></div><div class="a t" style="left:22px;top:102px;height:16px;line-height:16px;white-space:nowrap">Cell 13 Voltage</div><div class="a t" style="left:171px;top:102px;width:68px;height:16px;line-height:16px;text-align:center">0</div><div class="a t" style="left:240px;top:102px;width:42px;height:16px;line-height:16px;text-align:center">mV</div><div class="a" style="left:4px;top:119px;width:16px;height:16px"><svg width="16" height="16" viewBox="0 0 16 16"><rect x="0.5" y="0.5" width="15" height="15" rx="1.6" fill="#fff" stroke="#7e7e7e"/><rect x="2" y="2" width="12" height="12" fill="url(#lg)"/><path d="M5.6 7.5 V5.6 a2.4 2.4 0 0 1 4.8 0 V7.5" stroke="#ababab" stroke-width="1.3" fill="none"/><path d="M4 7 H12 V10.8 a1.2 1.2 0 0 1 -1.2 1.2 H5.2 a1.2 1.2 0 0 1 -1.2 -1.2 Z" fill="#ababab"/></svg></div><div class="a t" style="left:22px;top:119px;height:16px;line-height:16px;white-space:nowrap">Cell 14 Voltage</div><div class="a t" style="left:171px;top:119px;width:68px;height:16px;line-height:16px;text-align:center">0</div><div class="a t" style="left:240px;top:119px;width:42px;height:16px;line-height:16px;text-align:center">mV</div><div class="a" style="left:4px;top:136px;width:16px;height:16px"><svg width="16" height="16" viewBox="0 0 16 16"><rect x="0.5" y="0.5" width="15" height="15" rx="1.6" fill="#fff" stroke="#7e7e7e"/><rect x="2" y="2" width="12" height="12" fill="url(#lg)"/><path d="M5.6 7.5 V5.6 a2.4 2.4 0 0 1 4.8 0 V7.5" stroke="#ababab" stroke-width="1.3" fill="none"/><path d="M4 7 H12 V10.8 a1.2 1.2 0 0 1 -1.2 1.2 H5.2 a1.2 1.2 0 0 1 -1.2 -1.2 Z" fill="#ababab"/></svg></div><div class="a t" style="left:22px;top:136px;height:16px;line-height:16px;white-space:nowrap">Cell 15 Voltage</div><div class="a t" style="left:171px;top:136px;width:68px;height:16px;line-height:16px;text-align:center">0</div><div class="a t" style="left:240px;top:136px;width:42px;height:16px;line-height:16px;text-align:center">mV</div><div class="a" style="left:4px;top:153px;width:16px;height:16px"><svg width="16" height="16" viewBox="0 0 16 16"><rect x="0.5" y="0.5" width="15" height="15" rx="1.6" fill="#fff" stroke="#7e7e7e"/><rect x="2" y="2" width="12" height="12" fill="url(#lg)"/><path d="M5.6 7.5 V5.6 a2.4 2.4 0 0 1 4.8 0 V7.5" stroke="#ababab" stroke-width="1.3" fill="none"/><path d="M4 7 H12 V10.8 a1.2 1.2 0 0 1 -1.2 1.2 H5.2 a1.2 1.2 0 0 1 -1.2 -1.2 Z" fill="#ababab"/></svg></div><div class="a t" style="left:22px;top:153px;height:16px;line-height:16px;white-space:nowrap">Ext Avg Cell Voltage</div><div class="a t" style="left:171px;top:153px;width:68px;height:16px;line-height:16px;text-align:center">4084</div><div class="a t" style="left:240px;top:153px;width:42px;height:16px;line-height:16px;text-align:center">mV</div><div class="a" style="left:4px;top:170px;width:16px;height:16px"><svg width="16" height="16" viewBox="0 0 16 16"><rect x="0.5" y="0.5" width="15" height="15" rx="1.6" fill="#fff" stroke="#7e7e7e"/><rect x="2" y="2" width="12" height="12" fill="url(#lg)"/><path d="M5.6 7.5 V5.6 a2.4 2.4 0 0 1 4.8 0 V7.5" stroke="#ababab" stroke-width="1.3" fill="none"/><path d="M4 7 H12 V10.8 a1.2 1.2 0 0 1 -1.2 1.2 H5.2 a1.2 1.2 0 0 1 -1.2 -1.2 Z" fill="#ababab"/></svg></div><div class="a t" style="left:22px;top:170px;height:16px;line-height:16px;white-space:nowrap">TS1 Temperature</div><div class="a t" style="left:171px;top:170px;width:68px;height:16px;line-height:16px;text-align:center">26.0</div><div class="a t" style="left:240px;top:170px;width:42px;height:16px;line-height:16px;text-align:center">degC</div><div class="a" style="left:4px;top:187px;width:16px;height:16px"><svg width="16" height="16" viewBox="0 0 16 16"><rect x="0.5" y="0.5" width="15" height="15" rx="1.6" fill="#fff" stroke="#7e7e7e"/><rect x="2" y="2" width="12" height="12" fill="url(#lg)"/><path d="M5.6 7.5 V5.6 a2.4 2.4 0 0 1 4.8 0 V7.5" stroke="#ababab" stroke-width="1.3" fill="none"/><path d="M4 7 H12 V10.8 a1.2 1.2 0 0 1 -1.2 1.2 H5.2 a1.2 1.2 0 0 1 -1.2 -1.2 Z" fill="#ababab"/></svg></div><div class="a t" style="left:22px;top:187px;height:16px;line-height:16px;white-space:nowrap">TS2 Temperature</div><div class="a t" style="left:171px;top:187px;width:68px;height:16px;line-height:16px;text-align:center">27.0</div><div class="a t" style="left:240px;top:187px;width:42px;height:16px;line-height:16px;text-align:center">degC</div></div>
<div class="a" style="left:922px;top:94px;width:17px;height:218px;background:linear-gradient(to right,#eeede4,#fbfbf8 70%,#f8f7f2)"></div>
<div class="a" style="left:923px;top:94px;width:13px;height:14px;background:linear-gradient(135deg,#d0ddfd,#b6caf8);border:1px solid #fdfeff;border-radius:3px;box-shadow:1px 1px 0 #a9bde3"><svg width="13" height="14" viewBox="0 0 13 14" style="position:absolute;left:0;top:0"><path d="M2.2 9.2 L6.5 4.9 L10.8 9.2" stroke="#4d6185" stroke-width="2.2" fill="none"/></svg></div>
<div class="a" style="left:923px;top:111px;width:13px;height:125px;background:linear-gradient(135deg,#d0ddfd,#b6caf8);border:1px solid #fdfeff;border-radius:3px;box-shadow:1px 1px 0 #a9bde3"><svg width="13" height="125" style="position:absolute;left:0;top:0"><rect x="3" y="58" width="6" height="1" fill="#eef3ff"/><rect x="4" y="59" width="6" height="1" fill="#8aa6e8"/><rect x="3" y="60" width="6" height="1" fill="#eef3ff"/><rect x="4" y="61" width="6" height="1" fill="#8aa6e8"/><rect x="3" y="62" width="6" height="1" fill="#eef3ff"/><rect x="4" y="63" width="6" height="1" fill="#8aa6e8"/><rect x="3" y="64" width="6" height="1" fill="#eef3ff"/><rect x="4" y="65" width="6" height="1" fill="#8aa6e8"/></svg></div>
<div class="a" style="left:923px;top:295px;width:13px;height:14px;background:linear-gradient(135deg,#d0ddfd,#b6caf8);border:1px solid #fdfeff;border-radius:3px;box-shadow:1px 1px 0 #a9bde3"><svg width="13" height="14" viewBox="0 0 13 14" style="position:absolute;left:0;top:0"><path d="M2.2 4.8 L6.5 9.1 L10.8 4.8" stroke="#4d6185" stroke-width="2.2" fill="none"/></svg></div>
<svg class="a" style="left:0;top:0" width="949" height="640"><g fill="none" stroke="#e6434a" stroke-width="1.2"><ellipse cx="241.7" cy="281.7" rx="60.3" ry="22"/><ellipse cx="555.6" cy="114.1" rx="51.6" ry="19.3"/><ellipse cx="552" cy="213.5" rx="60.4" ry="20.8"/></g></svg>
<div class="a" style="left:7px;top:332px;width:942px;height:1px;background:#b3c8f1"></div>
<div class="a" style="left:6px;top:333px;width:1px;height:1px;background:#c8d7f5"></div>
<div class="a" style="left:5px;top:334px;width:1px;height:20px;background:linear-gradient(to bottom,#b3c8f1,rgba(179,200,241,0))"></div>
<div class="a" style="left:7px;top:334px;width:942px;height:14px;background:linear-gradient(to bottom,#e3eafa,#f8fafe)"></div>
<div class="a" style="left:11px;top:336px;font-family:'Liberation Mono',monospace;font-weight:bold;font-size:12px;line-height:14px;letter-spacing:-0.2px;color:#2356c1;white-space:nowrap">Bit Registers</div>
<div class="a" style="left:11px;top:353px;width:934px;height:282px;border:1px solid #7f9db9;background:#fff"></div>
<div class="a" style="left:12px;top:354px;width:917px;height:1px;background:#fff"></div>
<div class="a" style="left:12px;top:355px;width:916px;height:20px;background:linear-gradient(to bottom,#ebeadb 0,#ebeadb 16px,#e2dfcf 16px,#d6d2c2 17px,#cbc7b8 18px,#c7c3b3 19px)"></div>
<div class="a t" style="left:21px;top:355px;width:94px;height:20px;line-height:20px">Name</div>
<div class="a" style="left:113px;top:358px;width:1px;height:14px;background:#c7c5b2"></div>
<div class="a" style="left:114px;top:358px;width:1px;height:14px;background:#fff"></div>
<div class="a t" style="left:115px;top:355px;width:58px;height:20px;line-height:20px;text-align:center">Value</div>
<div class="a" style="left:171px;top:358px;width:1px;height:14px;background:#c7c5b2"></div>
<div class="a" style="left:172px;top:358px;width:1px;height:14px;background:#fff"></div>
<div class="a t" style="left:173px;top:355px;width:94px;height:20px;line-height:20px;text-align:center">Bit7</div>
<div class="a" style="left:265px;top:358px;width:1px;height:14px;background:#c7c5b2"></div>
<div class="a" style="left:266px;top:358px;width:1px;height:14px;background:#fff"></div>
<div class="a t" style="left:267px;top:355px;width:94px;height:20px;line-height:20px;text-align:center">Bit6</div>
<div class="a" style="left:359px;top:358px;width:1px;height:14px;background:#c7c5b2"></div>
<div class="a" style="left:360px;top:358px;width:1px;height:14px;background:#fff"></div>
<div class="a t" style="left:361px;top:355px;width:94px;height:20px;line-height:20px;text-align:center">Bit5</div>
<div class="a" style="left:453px;top:358px;width:1px;height:14px;background:#c7c5b2"></div>
<div class="a" style="left:454px;top:358px;width:1px;height:14px;background:#fff"></div>
<div class="a t" style="left:455px;top:355px;width:94px;height:20px;line-height:20px;text-align:center">Bit4</div>
<div class="a" style="left:547px;top:358px;width:1px;height:14px;background:#c7c5b2"></div>
<div class="a" style="left:548px;top:358px;width:1px;height:14px;background:#fff"></div>
<div class="a t" style="left:549px;top:355px;width:94px;height:20px;line-height:20px;text-align:center">Bit3</div>
<div class="a" style="left:641px;top:358px;width:1px;height:14px;background:#c7c5b2"></div>
<div class="a" style="left:642px;top:358px;width:1px;height:14px;background:#fff"></div>
<div class="a t" style="left:643px;top:355px;width:94px;height:20px;line-height:20px;text-align:center">Bit2</div>
<div class="a" style="left:735px;top:358px;width:1px;height:14px;background:#c7c5b2"></div>
<div class="a" style="left:736px;top:358px;width:1px;height:14px;background:#fff"></div>
<div class="a t" style="left:737px;top:355px;width:94px;height:20px;line-height:20px;text-align:center">Bit1</div>
<div class="a" style="left:829px;top:358px;width:1px;height:14px;background:#c7c5b2"></div>
<div class="a" style="left:830px;top:358px;width:1px;height:14px;background:#fff"></div>
<div class="a t" style="left:831px;top:355px;width:94px;height:20px;line-height:20px;text-align:center">Bit0</div>
<div class="a" style="left:923px;top:358px;width:1px;height:14px;background:#c7c5b2"></div>
<div class="a" style="left:924px;top:358px;width:1px;height:14px;background:#fff"></div>
<div class="a" style="left:12px;top:375px;width:914px;height:260px;overflow:hidden"><div class="a" style="left:0;top:0;width:914px;height:260px;background:#f4f4f4"></div><div class="a" style="left:0;top:16px;width:914px;height:1px;background:#ebe8d6"></div><div class="a" style="left:0;top:33px;width:914px;height:1px;background:#ebe8d6"></div><div class="a" style="left:0;top:50px;width:914px;height:1px;background:#ebe8d6"></div><div class="a" style="left:0;top:67px;width:914px;height:1px;background:#ebe8d6"></div><div class="a" style="left:0;top:84px;width:914px;height:1px;background:#ebe8d6"></div><div class="a" style="left:0;top:101px;width:914px;height:1px;background:#ebe8d6"></div><div class="a" style="left:0;top:118px;width:914px;height:1px;background:#ebe8d6"></div><div class="a" style="left:0;top:135px;width:914px;height:1px;background:#ebe8d6"></div><div class="a" style="left:0;top:152px;width:914px;height:1px;background:#ebe8d6"></div><div class="a" style="left:0;top:169px;width:914px;height:1px;background:#ebe8d6"></div><div class="a" style="left:0;top:186px;width:914px;height:1px;background:#ebe8d6"></div><div class="a" style="left:0;top:203px;width:914px;height:1px;background:#ebe8d6"></div><div class="a" style="left:0;top:220px;width:914px;height:1px;background:#ebe8d6"></div><div class="a" style="left:0;top:237px;width:914px;height:1px;background:#ebe8d6"></div><div class="a" style="left:0;top:254px;width:914px;height:1px;background:#ebe8d6"></div><div class="a" style="left:0;top:271px;width:914px;height:1px;background:#ebe8d6"></div><div class="a" style="left:103px;top:0;width:1px;height:260px;background:#ebe8d6"></div><div class="a" style="left:161px;top:0;width:1px;height:260px;background:#ebe8d6"></div><div class="a" style="left:255px;top:0;width:1px;height:260px;background:#ebe8d6"></div><div class="a" style="left:349px;top:0;width:1px;height:260px;background:#ebe8d6"></div><div class="a" style="left:443px;top:0;width:1px;height:260px;background:#ebe8d6"></div><div class="a" style="left:537px;top:0;width:1px;height:260px;background:#ebe8d6"></div><div class="a" style="left:631px;top:0;width:1px;height:260px;background:#ebe8d6"></div><div class="a" style="left:725px;top:0;width:1px;height:260px;background:#ebe8d6"></div><div class="a" style="left:819px;top:0;width:1px;height:260px;background:#ebe8d6"></div><div class="a" style="left:913px;top:0;width:1px;height:260px;background:#ebe8d6"></div><div class="a" style="left:7px;top:0px;width:16px;height:16px"><svg width="15" height="16" viewBox="0 0 15 16"><rect x="0.5" y="0.5" width="11" height="15" rx="2" fill="url(#eg)" stroke="#b2b2b2"/><path d="M13.2 3 L3.6 12.6" stroke="#2a2a2a" stroke-width="1.15"/><path d="M3.6 12.6 L3 13.4" stroke="#b08a50" stroke-width="1.4"/><path d="M7 11 L10.5 9.5" stroke="#c8c8c8" stroke-width="0.8"/></svg></div><div class="a t" style="left:22px;top:0px;height:16px;line-height:16px;white-space:nowrap">Battery Mode ...</div><div class="a t" style="left:103px;top:0px;width:57px;height:16px;line-height:16px;text-align:center">0x6001</div><div class="a t" style="left:162px;top:0px;width:93px;height:16px;line-height:16px;text-align:center;background:#33cc33"><span style="display:inline-block;transform:translateX(-1px) scaleX(0.93)">CapM</span></div><div class="a t" style="left:256px;top:0px;width:93px;height:16px;line-height:16px;text-align:center;background:#cd5c5c"><span style="display:inline-block;transform:translateX(-1px) scaleX(0.93)">ChgM</span></div><div class="a t" style="left:350px;top:0px;width:93px;height:16px;line-height:16px;text-align:center;background:#cd5c5c"><span style="display:inline-block;transform:translateX(-1px) scaleX(0.93)">AM</span></div><div class="a t" style="left:444px;top:0px;width:93px;height:16px;line-height:16px;text-align:center;background:#8a8a84"><span style="display:inline-block;transform:translateX(-1px) scaleX(0.93)">RSVD</span></div><div class="a t" style="left:538px;top:0px;width:93px;height:16px;line-height:16px;text-align:center;background:#8a8a84"><span style="display:inline-block;transform:translateX(-1px) scaleX(0.93)">RSVD</span></div><div class="a t" style="left:632px;top:0px;width:93px;height:16px;line-height:16px;text-align:center;background:#8a8a84"><span style="display:inline-block;transform:translateX(-1px) scaleX(0.93)">RSVD</span></div><div class="a t" style="left:726px;top:0px;width:93px;height:16px;line-height:16px;text-align:center;background:#33cc33"><span style="display:inline-block;transform:translateX(-1px) scaleX(0.93)">PB</span></div><div class="a t" style="left:820px;top:0px;width:93px;height:16px;line-height:16px;text-align:center;background:#33cc33"><span style="display:inline-block;transform:translateX(-1px) scaleX(0.93)">CC</span></div><div class="a t" style="left:22px;top:17px;height:16px;line-height:16px;white-space:nowrap">Battery Mode ...</div><div class="a t" style="left:103px;top:17px;width:57px;height:16px;line-height:16px;text-align:center"></div><div class="a t" style="left:162px;top:17px;width:93px;height:16px;line-height:16px;text-align:center;background:#33cc33"><span style="display:inline-block;transform:translateX(-1px) scaleX(0.93)">CF</span></div><div class="a t" style="left:256px;top:17px;width:93px;height:16px;line-height:16px;text-align:center;background:#8a8a84"><span style="display:inline-block;transform:translateX(-1px) scaleX(0.93)">RSVD</span></div><div class="a t" style="left:350px;top:17px;width:93px;height:16px;line-height:16px;text-align:center;background:#8a8a84"><span style="display:inline-block;transform:translateX(-1px) scaleX(0.93)">RSVD</span></div><div class="a t" style="left:444px;top:17px;width:93px;height:16px;line-height:16px;text-align:center;background:#8a8a84"><span style="display:inline-block;transform:translateX(-1px) scaleX(0.93)">RSVD</span></div><div class="a t" style="left:538px;top:17px;width:93px;height:16px;line-height:16px;text-align:center;background:#8a8a84"><span style="display:inline-block;transform:translateX(-1px) scaleX(0.93)">RSVD</span></div><div class="a t" style="left:632px;top:17px;width:93px;height:16px;line-height:16px;text-align:center;background:#8a8a84"><span style="display:inline-block;transform:translateX(-1px) scaleX(0.93)">RSVD</span></div><div class="a t" style="left:726px;top:17px;width:93px;height:16px;line-height:16px;text-align:center;background:#33cc33"><span style="display:inline-block;transform:translateX(-1px) scaleX(0.93)">PBS</span></div><div class="a t" style="left:820px;top:17px;width:93px;height:16px;line-height:16px;text-align:center;background:#cd5c5c"><span style="display:inline-block;transform:translateX(-1px) scaleX(0.93)">ICC</span></div><div class="a" style="left:5px;top:34px;width:16px;height:16px"><svg width="16" height="16" viewBox="0 0 16 16"><rect x="0.5" y="0.5" width="15" height="15" rx="1.6" fill="#fff" stroke="#7e7e7e"/><rect x="2" y="2" width="12" height="12" fill="url(#lg)"/><path d="M5.6 7.5 V5.6 a2.4 2.4 0 0 1 4.8 0 V7.5" stroke="#ababab" stroke-width="1.3" fill="none"/><path d="M4 7 H12 V10.8 a1.2 1.2 0 0 1 -1.2 1.2 H5.2 a1.2 1.2 0 0 1 -1.2 -1.2 Z" fill="#ababab"/></svg></div><div class="a t" style="left:22px;top:34px;height:16px;line-height:16px;white-space:nowrap">Battery Status...</div><div class="a t" style="left:103px;top:34px;width:57px;height:16px;line-height:16px;text-align:center">0x0080</div><div class="a t" style="left:162px;top:34px;width:93px;height:16px;line-height:16px;text-align:center;background:#33cc33"><span style="display:inline-block;transform:translateX(-1px) scaleX(0.93)">OCA</span></div><div class="a t" style="left:256px;top:34px;width:93px;height:16px;line-height:16px;text-align:center;background:#33cc33"><span style="display:inline-block;transform:translateX(-1px) scaleX(0.93)">TCA</span></div><div class="a t" style="left:350px;top:34px;width:93px;height:16px;line-height:16px;text-align:center;background:#8a8a84"><span style="display:inline-block;transform:translateX(-1px) scaleX(0.93)">RSVD</span></div><div class="a t" style="left:444px;top:34px;width:93px;height:16px;line-height:16px;text-align:center;background:#33cc33"><span style="display:inline-block;transform:translateX(-1px) scaleX(0.93)">OTA</span></div><div class="a t" style="left:538px;top:34px;width:93px;height:16px;line-height:16px;text-align:center;background:#33cc33"><span style="display:inline-block;transform:translateX(-1px) scaleX(0.93)">TDA</span></div><div class="a t" style="left:632px;top:34px;width:93px;height:16px;line-height:16px;text-align:center;background:#8a8a84"><span style="display:inline-block;transform:translateX(-1px) scaleX(0.93)">RSVD</span></div><div class="a t" style="left:726px;top:34px;width:93px;height:16px;line-height:16px;text-align:center;background:#33cc33"><span style="display:inline-block;transform:translateX(-1px) scaleX(0.93)">RCA</span></div><div class="a t" style="left:820px;top:34px;width:93px;height:16px;line-height:16px;text-align:center;background:#33cc33"><span style="display:inline-block;transform:translateX(-1px) scaleX(0.93)">RTA</span></div><div class="a t" style="left:22px;top:51px;height:16px;line-height:16px;white-space:nowrap">Battery Status...</div><div class="a t" style="left:103px;top:51px;width:57px;height:16px;line-height:16px;text-align:center"></div><div class="a t" style="left:162px;top:51px;width:93px;height:16px;line-height:16px;text-align:center;background:#cd5c5c"><span style="display:inline-block;transform:translateX(-1px) scaleX(0.93)">INIT</span></div><div class="a t" style="left:256px;top:51px;width:93px;height:16px;line-height:16px;text-align:center;background:#33cc33"><span style="display:inline-block;transform:translateX(-1px) scaleX(0.93)">DSG</span></div><div class="a t" style="left:350px;top:51px;width:93px;height:16px;line-height:16px;text-align:center;background:#33cc33"><span style="display:inline-block;transform:translateX(-1px) scaleX(0.93)">FC</span></div><div class="a t" style="left:444px;top:51px;width:93px;height:16px;line-height:16px;text-align:center;background:#33cc33"><span style="display:inline-block;transform:translateX(-1px) scaleX(0.93)">FD</span></div><div class="a t" style="left:538px;top:51px;width:93px;height:16px;line-height:16px;text-align:center;background:#33cc33"><span style="display:inline-block;transform:translateX(-1px) scaleX(0.93)">EC3</span></div><div class="a t" style="left:632px;top:51px;width:93px;height:16px;line-height:16px;text-align:center;background:#33cc33"><span style="display:inline-block;transform:translateX(-1px) scaleX(0.93)">EC2</span></div><div class="a t" style="left:726px;top:51px;width:93px;height:16px;line-height:16px;text-align:center;background:#33cc33"><span style="display:inline-block;transform:translateX(-1px) scaleX(0.93)">EC1</span></div><div class="a t" style="left:820px;top:51px;width:93px;height:16px;line-height:16px;text-align:center;background:#33cc33"><span style="display:inline-block;transform:translateX(-1px) scaleX(0.93)">EC0</span></div><div class="a" style="left:5px;top:68px;width:16px;height:16px"><svg width="16" height="16" viewBox="0 0 16 16"><rect x="0.5" y="0.5" width="15" height="15" rx="1.6" fill="#fff" stroke="#7e7e7e"/><rect x="2" y="2" width="12" height="12" fill="url(#lg)"/><path d="M5.6 7.5 V5.6 a2.4 2.4 0 0 1 4.8 0 V7.5" stroke="#ababab" stroke-width="1.3" fill="none"/><path d="M4 7 H12 V10.8 a1.2 1.2 0 0 1 -1.2 1.2 H5.2 a1.2 1.2 0 0 1 -1.2 -1.2 Z" fill="#ababab"/></svg></div><div class="a t" style="left:22px;top:68px;height:16px;line-height:16px;white-space:nowrap">Operation Stat...</div><div class="a t" style="left:103px;top:68px;width:57px;height:16px;line-height:16px;text-align:center">0x0107</div><div class="a t" style="left:162px;top:68px;width:93px;height:16px;line-height:16px;text-align:center;background:#33cc33"><span style="display:inline-block;transform:translateX(-1px) scaleX(0.93)">SLEEP</span></div><div class="a t" style="left:256px;top:68px;width:93px;height:16px;line-height:16px;text-align:center;background:#33cc33"><span style="display:inline-block;transform:translateX(-1px) scaleX(0.93)">XCHG</span></div><div class="a t" style="left:350px;top:68px;width:93px;height:16px;line-height:16px;text-align:center;background:#33cc33"><span style="display:inline-block;transform:translateX(-1px) scaleX(0.93)">XDSG</span></div><div class="a t" style="left:444px;top:68px;width:93px;height:16px;line-height:16px;text-align:center;background:#33cc33"><span style="display:inline-block;transform:translateX(-1px) scaleX(0.93)">PF</span></div><div class="a t" style="left:538px;top:68px;width:93px;height:16px;line-height:16px;text-align:center;background:#33cc33"><span style="display:inline-block;transform:translateX(-1px) scaleX(0.93)">SS</span></div><div class="a t" style="left:632px;top:68px;width:93px;height:16px;line-height:16px;text-align:center;background:#33cc33"><span style="display:inline-block;transform:translateX(-1px) scaleX(0.93)">SDV</span></div><div class="a t" style="left:726px;top:68px;width:93px;height:16px;line-height:16px;text-align:center;background:#33cc33"><span style="display:inline-block;transform:translateX(-1px) scaleX(0.93)">SEC1</span></div><div class="a t" style="left:820px;top:68px;width:93px;height:16px;line-height:16px;text-align:center;background:#cd5c5c"><span style="display:inline-block;transform:translateX(-1px) scaleX(0.93)">SEC0</span></div><div class="a t" style="left:22px;top:85px;height:16px;line-height:16px;white-space:nowrap">Operation Stat...</div><div class="a t" style="left:103px;top:85px;width:57px;height:16px;line-height:16px;text-align:center"></div><div class="a t" style="left:162px;top:85px;width:93px;height:16px;line-height:16px;text-align:center;background:#8a8a84"><span style="display:inline-block;transform:translateX(-1px) scaleX(0.93)">RSVD</span></div><div class="a t" style="left:256px;top:85px;width:93px;height:16px;line-height:16px;text-align:center;background:#8a8a84"><span style="display:inline-block;transform:translateX(-1px) scaleX(0.93)">RSVD</span></div><div class="a t" style="left:350px;top:85px;width:93px;height:16px;line-height:16px;text-align:center;background:#33cc33"><span style="display:inline-block;transform:translateX(-1px) scaleX(0.93)">SAFE</span></div><div class="a t" style="left:444px;top:85px;width:93px;height:16px;line-height:16px;text-align:center;background:#33cc33"><span style="display:inline-block;transform:translateX(-1px) scaleX(0.93)">HCFET</span></div><div class="a t" style="left:538px;top:85px;width:93px;height:16px;line-height:16px;text-align:center;background:#33cc33"><span style="display:inline-block;transform:translateX(-1px) scaleX(0.93)">PCHG</span></div><div class="a t" style="left:632px;top:85px;width:93px;height:16px;line-height:16px;text-align:center;background:#cd5c5c"><span style="display:inline-block;transform:translateX(-1px) scaleX(0.93)">DSG</span></div><div class="a t" style="left:726px;top:85px;width:93px;height:16px;line-height:16px;text-align:center;background:#cd5c5c"><span style="display:inline-block;transform:translateX(-1px) scaleX(0.93)">CHG</span></div><div class="a t" style="left:820px;top:85px;width:93px;height:16px;line-height:16px;text-align:center;background:#cd5c5c"><span style="display:inline-block;transform:translateX(-1px) scaleX(0.93)">PRES</span></div><div class="a" style="left:5px;top:102px;width:16px;height:16px"><svg width="16" height="16" viewBox="0 0 16 16"><rect x="0.5" y="0.5" width="15" height="15" rx="1.6" fill="#fff" stroke="#7e7e7e"/><rect x="2" y="2" width="12" height="12" fill="url(#lg)"/><path d="M5.6 7.5 V5.6 a2.4 2.4 0 0 1 4.8 0 V7.5" stroke="#ababab" stroke-width="1.3" fill="none"/><path d="M4 7 H12 V10.8 a1.2 1.2 0 0 1 -1.2 1.2 H5.2 a1.2 1.2 0 0 1 -1.2 -1.2 Z" fill="#ababab"/></svg></div><div class="a t" style="left:22px;top:102px;height:16px;line-height:16px;white-space:nowrap">Operation Stat...</div><div class="a t" style="left:103px;top:102px;width:57px;height:16px;line-height:16px;text-align:center">0x1002</div><div class="a t" style="left:162px;top:102px;width:93px;height:16px;line-height:16px;text-align:center;background:#33cc33"><span style="display:inline-block;transform:translateX(-1px) scaleX(0.93)">KEYIN</span></div><div class="a t" style="left:256px;top:102px;width:93px;height:16px;line-height:16px;text-align:center;background:#8a8a84"><span style="display:inline-block;transform:translateX(-1px) scaleX(0.93)">RSVD</span></div><div class="a t" style="left:350px;top:102px;width:93px;height:16px;line-height:16px;text-align:center;background:#8a8a84"><span style="display:inline-block;transform:translateX(-1px) scaleX(0.93)">RSVD</span></div><div class="a t" style="left:444px;top:102px;width:93px;height:16px;line-height:16px;text-align:center;background:#cd5c5c"><span style="display:inline-block;transform:translateX(-1px) scaleX(0.93)">CB</span></div><div class="a t" style="left:538px;top:102px;width:93px;height:16px;line-height:16px;text-align:center;background:#33cc33"><span style="display:inline-block;transform:translateX(-1px) scaleX(0.93)">SLPCC</span></div><div class="a t" style="left:632px;top:102px;width:93px;height:16px;line-height:16px;text-align:center;background:#33cc33"><span style="display:inline-block;transform:translateX(-1px) scaleX(0.93)">SLPAD</span></div><div class="a t" style="left:726px;top:102px;width:93px;height:16px;line-height:16px;text-align:center;background:#8a8a84"><span style="display:inline-block;transform:translateX(-1px) scaleX(0.93)">RSVD</span></div><div class="a t" style="left:820px;top:102px;width:93px;height:16px;line-height:16px;text-align:center;background:#33cc33"><span style="display:inline-block;transform:translateX(-1px) scaleX(0.93)">INIT</span></div><div class="a t" style="left:22px;top:119px;height:16px;line-height:16px;white-space:nowrap">Operation Stat...</div><div class="a t" style="left:103px;top:119px;width:57px;height:16px;line-height:16px;text-align:center"></div><div class="a t" style="left:162px;top:119px;width:93px;height:16px;line-height:16px;text-align:center;background:#33cc33"><span style="display:inline-block;transform:translateX(-1px) scaleX(0.93)">SLEEPM</span></div><div class="a t" style="left:256px;top:119px;width:93px;height:16px;line-height:16px;text-align:center;background:#33cc33"><span style="display:inline-block;transform:translateX(-1px) scaleX(0.93)">XL</span></div><div class="a t" style="left:350px;top:119px;width:93px;height:16px;line-height:16px;text-align:center;background:#33cc33"><span style="display:inline-block;transform:translateX(-1px) scaleX(0.93)">CAL_OFFSET</span></div><div class="a t" style="left:444px;top:119px;width:93px;height:16px;line-height:16px;text-align:center;background:#33cc33"><span style="display:inline-block;transform:translateX(-1px) scaleX(0.93)">CAL</span></div><div class="a t" style="left:538px;top:119px;width:93px;height:16px;line-height:16px;text-align:center;background:#8a8a84"><span style="display:inline-block;transform:translateX(-1px) scaleX(0.93)">RSVD</span></div><div class="a t" style="left:632px;top:119px;width:93px;height:16px;line-height:16px;text-align:center;background:#33cc33"><span style="display:inline-block;transform:translateX(-1px) scaleX(0.93)">AUTH</span></div><div class="a t" style="left:726px;top:119px;width:93px;height:16px;line-height:16px;text-align:center;background:#cd5c5c"><span style="display:inline-block;transform:translateX(-1px) scaleX(0.93)">LED</span></div><div class="a t" style="left:820px;top:119px;width:93px;height:16px;line-height:16px;text-align:center;background:#33cc33"><span style="display:inline-block;transform:translateX(-1px) scaleX(0.93)">SDM</span></div><div class="a" style="left:5px;top:136px;width:16px;height:16px"><svg width="16" height="16" viewBox="0 0 16 16"><rect x="0.5" y="0.5" width="15" height="15" rx="1.6" fill="#fff" stroke="#7e7e7e"/><rect x="2" y="2" width="12" height="12" fill="url(#lg)"/><path d="M5.6 7.5 V5.6 a2.4 2.4 0 0 1 4.8 0 V7.5" stroke="#ababab" stroke-width="1.3" fill="none"/><path d="M4 7 H12 V10.8 a1.2 1.2 0 0 1 -1.2 1.2 H5.2 a1.2 1.2 0 0 1 -1.2 -1.2 Z" fill="#ababab"/></svg></div><div class="a t" style="left:22px;top:136px;height:16px;line-height:16px;white-space:nowrap">Temp Range</div><div class="a t" style="left:103px;top:136px;width:57px;height:16px;line-height:16px;text-align:center">0x04</div><div class="a t" style="left:162px;top:136px;width:93px;height:16px;line-height:16px;text-align:center;background:#8a8a84"><span style="display:inline-block;transform:translateX(-1px) scaleX(0.93)">RSVD</span></div><div class="a t" style="left:256px;top:136px;width:93px;height:16px;line-height:16px;text-align:center;background:#8a8a84"><span style="display:inline-block;transform:translateX(-1px) scaleX(0.93)">RSVD</span></div><div class="a t" style="left:350px;top:136px;width:93px;height:16px;line-height:16px;text-align:center;background:#8a8a84"><span style="display:inline-block;transform:translateX(-1px) scaleX(0.93)">RSVD</span></div><div class="a t" style="left:444px;top:136px;width:93px;height:16px;line-height:16px;text-align:center;background:#33cc33"><span style="display:inline-block;transform:translateX(-1px) scaleX(0.93)">OT</span></div><div class="a t" style="left:538px;top:136px;width:93px;height:16px;line-height:16px;text-align:center;background:#33cc33"><span style="display:inline-block;transform:translateX(-1px) scaleX(0.93)">HT</span></div><div class="a t" style="left:632px;top:136px;width:93px;height:16px;line-height:16px;text-align:center;background:#cd5c5c"><span style="display:inline-block;transform:translateX(-1px) scaleX(0.93)">ST</span></div><div class="a t" style="left:726px;top:136px;width:93px;height:16px;line-height:16px;text-align:center;background:#33cc33"><span style="display:inline-block;transform:translateX(-1px) scaleX(0.93)">LT</span></div><div class="a t" style="left:820px;top:136px;width:93px;height:16px;line-height:16px;text-align:center;background:#33cc33"><span style="display:inline-block;transform:translateX(-1px) scaleX(0.93)">UT</span></div><div class="a" style="left:5px;top:153px;width:16px;height:16px"><svg width="16" height="16" viewBox="0 0 16 16"><rect x="0.5" y="0.5" width="15" height="15" rx="1.6" fill="#fff" stroke="#7e7e7e"/><rect x="2" y="2" width="12" height="12" fill="url(#lg)"/><path d="M5.6 7.5 V5.6 a2.4 2.4 0 0 1 4.8 0 V7.5" stroke="#ababab" stroke-width="1.3" fill="none"/><path d="M4 7 H12 V10.8 a1.2 1.2 0 0 1 -1.2 1.2 H5.2 a1.2 1.2 0 0 1 -1.2 -1.2 Z" fill="#ababab"/></svg></div><div class="a t" style="left:22px;top:153px;height:16px;line-height:16px;white-space:nowrap">Charging Status</div><div class="a t" style="left:103px;top:153px;width:57px;height:16px;line-height:16px;text-align:center">0x02</div><div class="a t" style="left:162px;top:153px;width:93px;height:16px;line-height:16px;text-align:center;background:#33cc33"><span style="display:inline-block;transform:translateX(-1px) scaleX(0.93)">VCT</span></div><div class="a t" style="left:256px;top:153px;width:93px;height:16px;line-height:16px;text-align:center;background:#8a8a84"><span style="display:inline-block;transform:translateX(-1px) scaleX(0.93)">RSVD</span></div><div class="a t" style="left:350px;top:153px;width:93px;height:16px;line-height:16px;text-align:center;background:#33cc33"><span style="display:inline-block;transform:translateX(-1px) scaleX(0.93)">SU</span></div><div class="a t" style="left:444px;top:153px;width:93px;height:16px;line-height:16px;text-align:center;background:#33cc33"><span style="display:inline-block;transform:translateX(-1px) scaleX(0.93)">IN</span></div><div class="a t" style="left:538px;top:153px;width:93px;height:16px;line-height:16px;text-align:center;background:#8a8a84"><span style="display:inline-block;transform:translateX(-1px) scaleX(0.93)">RSVD</span></div><div class="a t" style="left:632px;top:153px;width:93px;height:16px;line-height:16px;text-align:center;background:#8a8a84"><span style="display:inline-block;transform:translateX(-1px) scaleX(0.93)">RSVD</span></div><div class="a t" style="left:726px;top:153px;width:93px;height:16px;line-height:16px;text-align:center;background:#cd5c5c"><span style="display:inline-block;transform:translateX(-1px) scaleX(0.93)">FCHG</span></div><div class="a t" style="left:820px;top:153px;width:93px;height:16px;line-height:16px;text-align:center;background:#33cc33"><span style="display:inline-block;transform:translateX(-1px) scaleX(0.93)">PCHG</span></div><div class="a" style="left:5px;top:170px;width:16px;height:16px"><svg width="16" height="16" viewBox="0 0 16 16"><rect x="0.5" y="0.5" width="15" height="15" rx="1.6" fill="#fff" stroke="#7e7e7e"/><rect x="2" y="2" width="12" height="12" fill="url(#lg)"/><path d="M5.6 7.5 V5.6 a2.4 2.4 0 0 1 4.8 0 V7.5" stroke="#ababab" stroke-width="1.3" fill="none"/><path d="M4 7 H12 V10.8 a1.2 1.2 0 0 1 -1.2 1.2 H5.2 a1.2 1.2 0 0 1 -1.2 -1.2 Z" fill="#ababab"/></svg></div><div class="a t" style="left:22px;top:170px;height:16px;line-height:16px;white-space:nowrap">Gauging Statu...</div><div class="a t" style="left:103px;top:170px;width:57px;height:16px;line-height:16px;text-align:center">0x10</div><div class="a t" style="left:162px;top:170px;width:93px;height:16px;line-height:16px;text-align:center;background:#33cc33"><span style="display:inline-block;transform:translateX(-1px) scaleX(0.93)">VDQ</span></div><div class="a t" style="left:256px;top:170px;width:93px;height:16px;line-height:16px;text-align:center;background:#33cc33"><span style="display:inline-block;transform:translateX(-1px) scaleX(0.93)">EDV2</span></div><div class="a t" style="left:350px;top:170px;width:93px;height:16px;line-height:16px;text-align:center;background:#33cc33"><span style="display:inline-block;transform:translateX(-1px) scaleX(0.93)">EDV1</span></div><div class="a t" style="left:444px;top:170px;width:93px;height:16px;line-height:16px;text-align:center;background:#8a8a84"><span style="display:inline-block;transform:translateX(-1px) scaleX(0.93)">RSVD</span></div><div class="a t" style="left:538px;top:170px;width:93px;height:16px;line-height:16px;text-align:center;background:#8a8a84"><span style="display:inline-block;transform:translateX(-1px) scaleX(0.93)">RSVD</span></div><div class="a t" style="left:632px;top:170px;width:93px;height:16px;line-height:16px;text-align:center;background:#33cc33"><span style="display:inline-block;transform:translateX(-1px) scaleX(0.93)">FCCX</span></div><div class="a t" style="left:726px;top:170px;width:93px;height:16px;line-height:16px;text-align:center;background:#33cc33"><span style="display:inline-block;transform:translateX(-1px) scaleX(0.93)">OCVFR</span></div><div class="a t" style="left:820px;top:170px;width:93px;height:16px;line-height:16px;text-align:center;background:#33cc33"><span style="display:inline-block;transform:translateX(-1px) scaleX(0.93)">REST</span></div><div class="a t" style="left:22px;top:187px;height:16px;line-height:16px;white-space:nowrap">Gauging Statu...</div><div class="a t" style="left:103px;top:187px;width:57px;height:16px;line-height:16px;text-align:center"></div><div class="a t" style="left:162px;top:187px;width:93px;height:16px;line-height:16px;text-align:center;background:#33cc33"><span style="display:inline-block;transform:translateX(-1px) scaleX(0.93)">CF</span></div><div class="a t" style="left:256px;top:187px;width:93px;height:16px;line-height:16px;text-align:center;background:#33cc33"><span style="display:inline-block;transform:translateX(-1px) scaleX(0.93)">DSG</span></div><div class="a t" style="left:350px;top:187px;width:93px;height:16px;line-height:16px;text-align:center;background:#33cc33"><span style="display:inline-block;transform:translateX(-1px) scaleX(0.93)">EDV</span></div><div class="a t" style="left:444px;top:187px;width:93px;height:16px;line-height:16px;text-align:center;background:#cd5c5c"><span style="display:inline-block;transform:translateX(-1px) scaleX(0.93)">BAL_OK</span></div><div class="a t" style="left:538px;top:187px;width:93px;height:16px;line-height:16px;text-align:center;background:#33cc33"><span style="display:inline-block;transform:translateX(-1px) scaleX(0.93)">TC</span></div><div class="a t" style="left:632px;top:187px;width:93px;height:16px;line-height:16px;text-align:center;background:#33cc33"><span style="display:inline-block;transform:translateX(-1px) scaleX(0.93)">TD</span></div><div class="a t" style="left:726px;top:187px;width:93px;height:16px;line-height:16px;text-align:center;background:#33cc33"><span style="display:inline-block;transform:translateX(-1px) scaleX(0.93)">FC</span></div><div class="a t" style="left:820px;top:187px;width:93px;height:16px;line-height:16px;text-align:center;background:#33cc33"><span style="display:inline-block;transform:translateX(-1px) scaleX(0.93)">FD</span></div><div class="a" style="left:5px;top:204px;width:16px;height:16px"><svg width="16" height="16" viewBox="0 0 16 16"><rect x="0.5" y="0.5" width="15" height="15" rx="1.6" fill="#fff" stroke="#7e7e7e"/><rect x="2" y="2" width="12" height="12" fill="url(#lg)"/><path d="M5.6 7.5 V5.6 a2.4 2.4 0 0 1 4.8 0 V7.5" stroke="#ababab" stroke-width="1.3" fill="none"/><path d="M4 7 H12 V10.8 a1.2 1.2 0 0 1 -1.2 1.2 H5.2 a1.2 1.2 0 0 1 -1.2 -1.2 Z" fill="#ababab"/></svg></div><div class="a t" style="left:22px;top:204px;height:16px;line-height:16px;white-space:nowrap">Manufacturing...</div><div class="a t" style="left:103px;top:204px;width:57px;height:16px;line-height:16px;text-align:center">0x0210</div><div class="a t" style="left:162px;top:204px;width:93px;height:16px;line-height:16px;text-align:center;background:#33cc33"><span style="display:inline-block;transform:translateX(-1px) scaleX(0.93)">CAL_EN</span></div><div class="a t" style="left:256px;top:204px;width:93px;height:16px;line-height:16px;text-align:center;background:#33cc33"><span style="display:inline-block;transform:translateX(-1px) scaleX(0.93)">LT_TEST</span></div><div class="a t" style="left:350px;top:204px;width:93px;height:16px;line-height:16px;text-align:center;background:#33cc33"><span style="display:inline-block;transform:translateX(-1px) scaleX(0.93)">CB_TEST</span></div><div class="a t" style="left:444px;top:204px;width:93px;height:16px;line-height:16px;text-align:center;background:#33cc33"><span style="display:inline-block;transform:translateX(-1px) scaleX(0.93)">AFE_DD_TEST</span></div><div class="a t" style="left:538px;top:204px;width:93px;height:16px;line-height:16px;text-align:center;background:#8a8a84"><span style="display:inline-block;transform:translateX(-1px) scaleX(0.93)">RSVD</span></div><div class="a t" style="left:632px;top:204px;width:93px;height:16px;line-height:16px;text-align:center;background:#8a8a84"><span style="display:inline-block;transform:translateX(-1px) scaleX(0.93)">RSVD</span></div><div class="a t" style="left:726px;top:204px;width:93px;height:16px;line-height:16px;text-align:center;background:#cd5c5c"><span style="display:inline-block;transform:translateX(-1px) scaleX(0.93)">LED_EN</span></div><div class="a t" style="left:820px;top:204px;width:93px;height:16px;line-height:16px;text-align:center;background:#33cc33"><span style="display:inline-block;transform:translateX(-1px) scaleX(0.93)">SAFE_EN</span></div><div class="a t" style="left:22px;top:221px;height:16px;line-height:16px;white-space:nowrap">Manufacturing...</div><div class="a t" style="left:103px;top:221px;width:57px;height:16px;line-height:16px;text-align:center"></div><div class="a t" style="left:162px;top:221px;width:93px;height:16px;line-height:16px;text-align:center;background:#33cc33"><span style="display:inline-block;transform:translateX(-1px) scaleX(0.93)">BBR_EN</span></div><div class="a t" style="left:256px;top:221px;width:93px;height:16px;line-height:16px;text-align:center;background:#33cc33"><span style="display:inline-block;transform:translateX(-1px) scaleX(0.93)">PF_EN</span></div><div class="a t" style="left:350px;top:221px;width:93px;height:16px;line-height:16px;text-align:center;background:#33cc33"><span style="display:inline-block;transform:translateX(-1px) scaleX(0.93)">LF_EN</span></div><div class="a t" style="left:444px;top:221px;width:93px;height:16px;line-height:16px;text-align:center;background:#cd5c5c"><span style="display:inline-block;transform:translateX(-1px) scaleX(0.93)">FET_EN</span></div><div class="a t" style="left:538px;top:221px;width:93px;height:16px;line-height:16px;text-align:center;background:#8a8a84"><span style="display:inline-block;transform:translateX(-1px) scaleX(0.93)">RSVD</span></div><div class="a t" style="left:632px;top:221px;width:93px;height:16px;line-height:16px;text-align:center;background:#33cc33"><span style="display:inline-block;transform:translateX(-1px) scaleX(0.93)">DSG_TEST</span></div><div class="a t" style="left:726px;top:221px;width:93px;height:16px;line-height:16px;text-align:center;background:#33cc33"><span style="display:inline-block;transform:translateX(-1px) scaleX(0.93)">CHG_TEST</span></div><div class="a t" style="left:820px;top:221px;width:93px;height:16px;line-height:16px;text-align:center;background:#33cc33"><span style="display:inline-block;transform:translateX(-1px) scaleX(0.93)">PCHG_TEST</span></div><div class="a" style="left:5px;top:238px;width:16px;height:16px"><svg width="16" height="16" viewBox="0 0 16 16"><rect x="0.5" y="0.5" width="15" height="15" rx="1.6" fill="#fff" stroke="#7e7e7e"/><rect x="2" y="2" width="12" height="12" fill="url(#lg)"/><path d="M5.6 7.5 V5.6 a2.4 2.4 0 0 1 4.8 0 V7.5" stroke="#ababab" stroke-width="1.3" fill="none"/><path d="M4 7 H12 V10.8 a1.2 1.2 0 0 1 -1.2 1.2 H5.2 a1.2 1.2 0 0 1 -1.2 -1.2 Z" fill="#ababab"/></svg></div><div class="a t" style="left:22px;top:238px;height:16px;line-height:16px;white-space:nowrap">Safety Alert A...</div><div class="a t" style="left:103px;top:238px;width:57px;height:16px;line-height:16px;text-align:center">0x0000</div><div class="a t" style="left:162px;top:238px;width:93px;height:16px;line-height:16px;text-align:center;background:#8a8a84"><span style="display:inline-block;transform:translateX(-1px) scaleX(0.93)">RSVD</span></div><div class="a t" style="left:256px;top:238px;width:93px;height:16px;line-height:16px;text-align:center;background:#33cc33"><span style="display:inline-block;transform:translateX(-1px) scaleX(0.93)">OCDL</span></div><div class="a t" style="left:350px;top:238px;width:93px;height:16px;line-height:16px;text-align:center;background:#33cc33"><span style="display:inline-block;transform:translateX(-1px) scaleX(0.93)">OTF</span></div><div class="a t" style="left:444px;top:238px;width:93px;height:16px;line-height:16px;text-align:center;background:#33cc33"><span style="display:inline-block;transform:translateX(-1px) scaleX(0.93)">AFE_OVRD</span></div><div class="a t" style="left:538px;top:238px;width:93px;height:16px;line-height:16px;text-align:center;background:#33cc33"><span style="display:inline-block;transform:translateX(-1px) scaleX(0.93)">UTD</span></div><div class="a t" style="left:632px;top:238px;width:93px;height:16px;line-height:16px;text-align:center;background:#33cc33"><span style="display:inline-block;transform:translateX(-1px) scaleX(0.93)">UTC</span></div><div class="a t" style="left:726px;top:238px;width:93px;height:16px;line-height:16px;text-align:center;background:#33cc33"><span style="display:inline-block;transform:translateX(-1px) scaleX(0.93)">OTD</span></div><div class="a t" style="left:820px;top:238px;width:93px;height:16px;line-height:16px;text-align:center;background:#33cc33"><span style="display:inline-block;transform:translateX(-1px) scaleX(0.93)">OTC</span></div><div class="a t" style="left:22px;top:255px;height:16px;line-height:16px;white-space:nowrap">Safety Alert A...</div><div class="a t" style="left:103px;top:255px;width:57px;height:16px;line-height:16px;text-align:center"></div><div class="a t" style="left:162px;top:255px;width:93px;height:16px;line-height:16px;text-align:center;background:#33cc33"><span style="display:inline-block;transform:translateX(-1px) scaleX(0.93)">LSOCL</span></div><div class="a t" style="left:256px;top:255px;width:93px;height:16px;line-height:16px;text-align:center;background:#33cc33"><span style="display:inline-block;transform:translateX(-1px) scaleX(0.93)">LSOC</span></div><div class="a t" style="left:350px;top:255px;width:93px;height:16px;line-height:16px;text-align:center;background:#33cc33"><span style="display:inline-block;transform:translateX(-1px) scaleX(0.93)">AOLD</span></div><div class="a t" style="left:444px;top:255px;width:93px;height:16px;line-height:16px;text-align:center;background:#33cc33"><span style="display:inline-block;transform:translateX(-1px) scaleX(0.93)">SCDL</span></div><div class="a t" style="left:538px;top:255px;width:93px;height:16px;line-height:16px;text-align:center;background:#33cc33"><span style="display:inline-block;transform:translateX(-1px) scaleX(0.93)">SCCL</span></div><div class="a t" style="left:632px;top:255px;width:93px;height:16px;line-height:16px;text-align:center;background:#33cc33"><span style="display:inline-block;transform:translateX(-1px) scaleX(0.93)">SOCC</span></div><div class="a t" style="left:726px;top:255px;width:93px;height:16px;line-height:16px;text-align:center;background:#33cc33"><span style="display:inline-block;transform:translateX(-1px) scaleX(0.93)">SCDL</span></div><div class="a t" style="left:820px;top:255px;width:93px;height:16px;line-height:16px;text-align:center;background:#33cc33"><span style="display:inline-block;transform:translateX(-1px) scaleX(0.93)">COV</span></div></div>
<div class="a" style="left:928px;top:355px;width:17px;height:281px;background:linear-gradient(to right,#eeede4,#fbfbf8 70%,#f8f7f2)"></div>
<div class="a" style="left:929px;top:355px;width:13px;height:14px;background:linear-gradient(135deg,#d0ddfd,#b6caf8);border:1px solid #fdfeff;border-radius:3px;box-shadow:1px 1px 0 #a9bde3"><svg width="13" height="14" viewBox="0 0 13 14" style="position:absolute;left:0;top:0"><path d="M2.2 9.2 L6.5 4.9 L10.8 9.2" stroke="#4d6185" stroke-width="2.2" fill="none"/></svg></div>
<div class="a" style="left:929px;top:372px;width:13px;height:129px;background:linear-gradient(135deg,#d0ddfd,#b6caf8);border:1px solid #fdfeff;border-radius:3px;box-shadow:1px 1px 0 #a9bde3"><svg width="13" height="129" style="position:absolute;left:0;top:0"><rect x="3" y="60" width="6" height="1" fill="#eef3ff"/><rect x="4" y="61" width="6" height="1" fill="#8aa6e8"/><rect x="3" y="62" width="6" height="1" fill="#eef3ff"/><rect x="4" y="63" width="6" height="1" fill="#8aa6e8"/><rect x="3" y="64" width="6" height="1" fill="#eef3ff"/><rect x="4" y="65" width="6" height="1" fill="#8aa6e8"/><rect x="3" y="66" width="6" height="1" fill="#eef3ff"/><rect x="4" y="67" width="6" height="1" fill="#8aa6e8"/></svg></div>
<div class="a" style="left:929px;top:618px;width:13px;height:14px;background:linear-gradient(135deg,#d0ddfd,#b6caf8);border:1px solid #fdfeff;border-radius:3px;box-shadow:1px 1px 0 #a9bde3"><svg width="13" height="14" viewBox="0 0 13 14" style="position:absolute;left:0;top:0"><path d="M2.2 4.8 L6.5 9.1 L10.8 4.8" stroke="#4d6185" stroke-width="2.2" fill="none"/></svg></div>
</body></html>
